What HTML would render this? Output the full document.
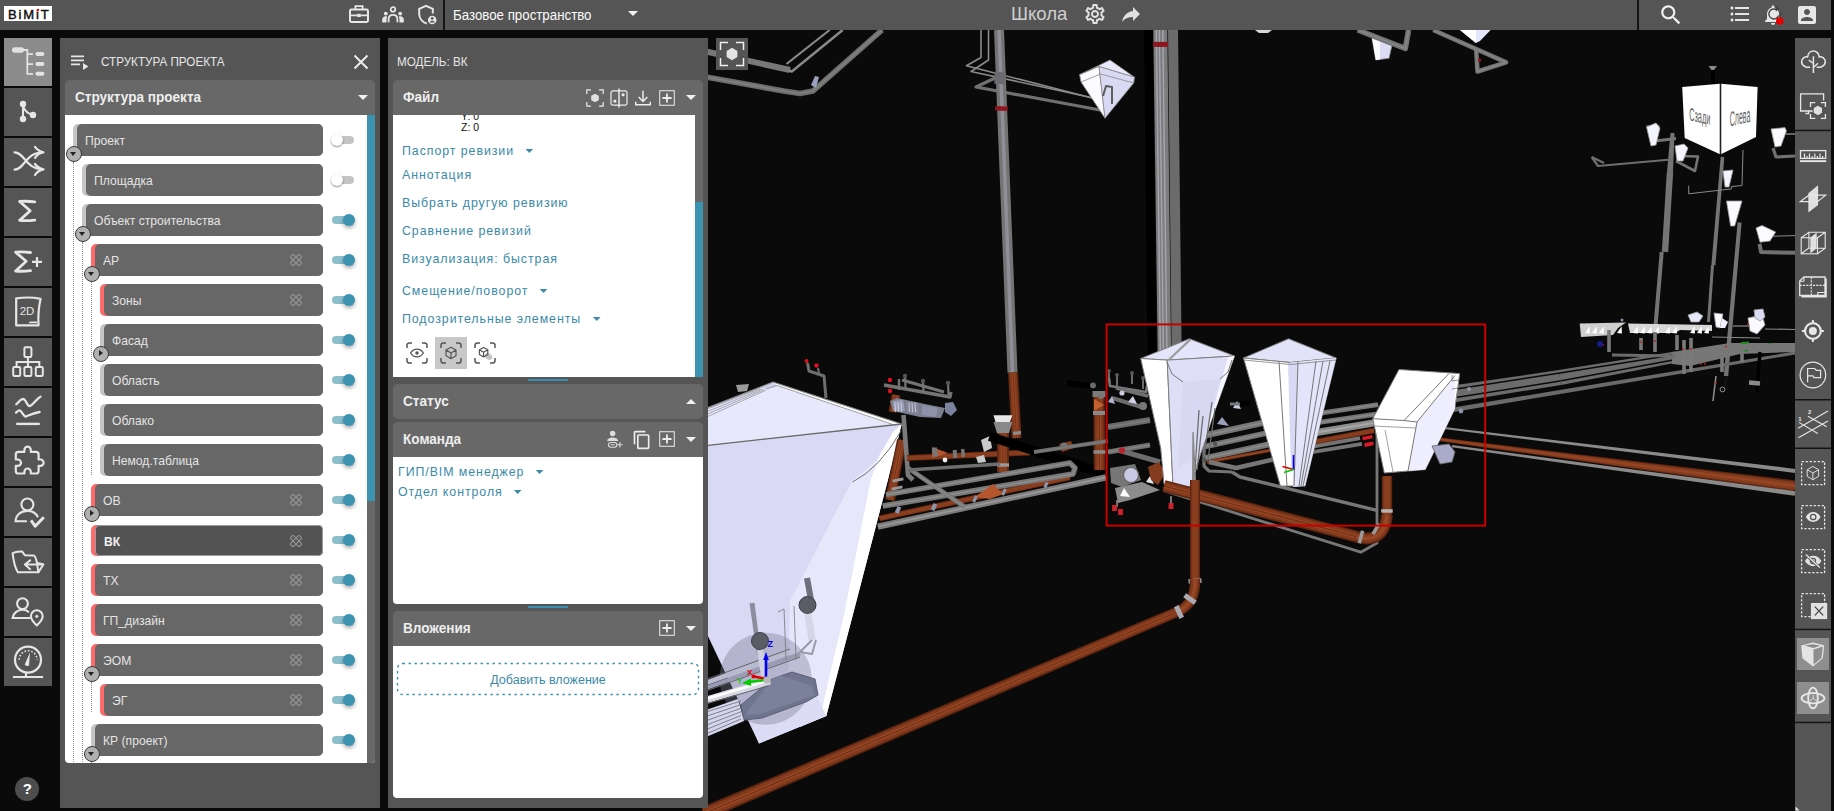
<!DOCTYPE html>
<html lang="ru"><head><meta charset="utf-8"><title>BIMIT</title>
<style>
*{box-sizing:border-box;margin:0;padding:0}
html,body{width:1834px;height:811px;overflow:hidden;background:#0a0a0a;font-family:"Liberation Sans",sans-serif;color:#e0e0e0}
.abs{position:absolute}
#scene{position:absolute;left:0;top:0;width:1834px;height:811px}
#topbar{position:absolute;left:0;top:0;width:1831px;height:30px;background:#555}
#logo{position:absolute;left:4px;top:6px;width:48px;height:15px;background:#fff;color:#111;font-weight:bold;font-size:14px;line-height:15px;text-align:center;letter-spacing:0px}
.tsep{position:absolute;top:0;width:2px;height:30px;background:#1c1c1c}
.ti{position:absolute;top:3px;width:24px;height:24px}
.ti svg,.lb svg,.rb svg,.hi svg{display:block;width:100%;height:100%}
#space{position:absolute;left:453px;top:0;height:30px;line-height:30px;font-size:14px;color:#f2f2f2}
#proj{position:absolute;left:1011px;top:0;height:30px;line-height:28px;font-size:19px;color:#cfcfcf}
.lb{position:absolute;left:4px;width:48px;height:48px;background:#555}
.lb.act{background:#8c8c8c}
.lb svg{width:48px;height:48px}
#help{position:absolute;left:16px;top:776px;width:24px;height:24px;border-radius:12px;background:#4d4d4d;color:#fff;font-weight:bold;font-size:15px;line-height:24px;text-align:center}
.panel{position:absolute;top:38px;height:770px;background:#555}
.ptitle{position:absolute;top:0;height:46px;line-height:47px;font-size:13px;color:#e6e6e6}
.sh{position:absolute;height:36px;background:#696969;border-radius:5px 5px 0 0;font-weight:bold;font-size:14.5px;line-height:35px;color:#eee;padding-left:10px}
.sh.closed{border-radius:5px}
.wc{position:absolute;background:#fff}
.hi{position:absolute;width:22px;height:22px}
.row{position:absolute;height:32px;right:52px;background:#696969;border-radius:5px;border-left:4px solid #bdbdbd;font-size:13px;line-height:32px;padding-left:8px;color:#e4e4e4;white-space:nowrap}
.row.red{border-left-color:#f06468}
.row.sel{background:#555;font-weight:bold;color:#fff;box-shadow:0 1px 2px rgba(0,0,0,.6)}
.fl{position:absolute;right:19px;top:9px;width:14px;height:14px}
.tg{position:absolute;left:267px;width:24px;height:8px;border-radius:4px;background:#c4c4c4}
.tg i{position:absolute;left:-1px;top:-3px;width:14px;height:14px;border-radius:7px;background:#fff;box-shadow:0 1px 2px rgba(0,0,0,.45)}
.tg.on{background:#8dbfd2}
.tg.on i{left:11px;background:#3a8fb0}
.ex{position:absolute;width:16px;height:16px;border-radius:8px;background:#b0b0b0;border:1.5px solid #3a3a3a}
.ex:after{content:"";position:absolute;left:3px;top:5px;border:3.5px solid transparent;border-top:4px solid #222;border-bottom:0}
.ex.r:after{left:5px;top:3px;border:3.5px solid transparent;border-left:4px solid #222;border-right:0}
.vl{position:absolute;width:0;border-left:1px dotted #777}
.lk{position:absolute;left:9px;font-size:13px;letter-spacing:1px;color:#3a8aa8;white-space:nowrap;line-height:16px}
.lk b{display:inline-block;width:0;height:0;border:4px solid transparent;border-top:4px solid #3a8aa8;border-bottom:0;margin-left:12px;vertical-align:2px}
.hnd{position:absolute;left:140px;width:40px;height:2px;background:#3a8fb0}
#rt{position:absolute;left:1795px;top:38px;width:36px;height:773px;background:#555}
.rb{position:absolute;left:4px;width:28px;height:28px}
.rsep{position:absolute;left:0;width:36px;height:2px;background:#2a2a2a}

.car{position:absolute;top:15px;width:0;height:0;border:5px solid transparent;border-top:5px solid #f0f0f0;border-bottom:0}
.car.up{border-top:0;border-bottom:5px solid #f0f0f0}
</style>
<style>
.sx{display:inline-block;transform-origin:0 50%;transform:scaleX(.934)}
.sh .sx{transform:scaleX(.904)}
.sh{font-size:15px}
.ptitle{transform-origin:0 50%;transform:scaleX(.897)}
.lk{transform-origin:0 50%;transform:scaleX(.95)}
#space{transform-origin:0 50%;transform:scaleX(.949)}
#proj{transform-origin:0 50%;transform:scaleX(.977)}
.row{height:31.5px;line-height:32.5px}
#logo span{display:inline-block;transform:scaleX(1.22);font-weight:normal;font-size:12.5px;letter-spacing:.3px;-webkit-text-stroke:.35px #111}
#logo i{position:absolute;left:33.4px;top:3.6px;width:2.2px;height:2.2px;background:#f00}
</style>
<style>
.row{line-height:34px;background:#676767}
.row.red{border-left-color:#ff6b6b}
.tg{left:268px;width:21px}
.tg i{left:-1px;top:-2px;width:12px;height:12px}
.tg.on i{left:10px}
.sh{background:#686868}
</style>
<style>.sh{line-height:33px}</style>
<style>#space{line-height:31.500px;color:#fafafa}.tsep{background:#141414}</style>
<style>.row{border-left-color:#c6c6c6}.vl{border-left-color:#8e8e8e}#help{left:15.300px;top:776.500px}</style>
<style>
#logo{line-height:16px;text-align:left;padding-left:3.900px;white-space:nowrap;overflow:hidden;height:15px}
#logo span{transform:none;font-size:13px;letter-spacing:1.900px;-webkit-text-stroke:.2px #111;font-weight:normal}
#logo i{left:33px;top:3px;width:2.100px;height:2.100px}
</style>
<style>#logo span{-webkit-text-stroke:.45px #111}</style>
<style>.hi{width:20px;height:20px;margin:1px 0 0 1px}</style>
<style>.fl{right:20px}.tg{left:266.500px;width:22.500px}.tg.on i{left:11.500px;background:#3b93b0;box-shadow:0 2px 4px rgba(0,0,0,.35)}.tg.on{background:#8cbecd}</style>
<style>.row.sel{box-shadow:inset 0 0 0 1px #9c9c9c;padding-left:9px;margin-top:.5px;height:31px;line-height:34.500px;background:#535353;color:#f0f0f0}</style>
<style>
.row{border-left:0;background:#c6c6c6;padding-left:12px}
.row.red{background:#ff6b6b}
.row:before{content:"";position:absolute;left:4px;top:0;right:0;bottom:0;background:#676767;border-radius:5px}
.row .sx{position:relative;z-index:1}
.row .fl{z-index:1}
.row.sel{box-shadow:none;padding-left:13px;background:#ff6b6b}
.row.sel:before{background:#535353;box-shadow:inset 0 0 0 1px #9c9c9c}
</style>
</head><body>
<svg id="scene" viewBox="0 0 1834 811" width="1834" height="811">
<rect x="0" y="0" width="1834" height="811" fill="#0a0a0a"/>
<polyline points="706,51.5 790,70" fill="none" stroke="#787878" stroke-width="6" stroke-linecap="butt" stroke-linejoin="round"/>
<polyline points="786.5,64 829.6,30" fill="none" stroke="#8a8a8a" stroke-width="2.2" stroke-linecap="butt" stroke-linejoin="round"/>
<polyline points="789,70.5 791.8,71.5 842.7,30" fill="none" stroke="#8a8a8a" stroke-width="2.4" stroke-linecap="butt" stroke-linejoin="round"/>
<polyline points="706,77 783.6,91 800,93.5 813,91 882,30" fill="none" stroke="#6e6e6e" stroke-width="5.6" stroke-linecap="butt" stroke-linejoin="round"/>
<polyline points="706,77 783.6,91 800,93.5 813,91 882,30" fill="none" stroke="#808080" stroke-width="1.68" stroke-linecap="butt" stroke-linejoin="round"/>
<polygon points="811,85 815,76 819,77 816,88" fill="#9aa2c0"/>
<polyline points="981,30 981,57.5 966.4,65.7 1094,98.5" fill="none" stroke="#8a8a8a" stroke-width="1.6" stroke-linecap="butt" stroke-linejoin="round"/>
<polyline points="988.5,30 988.5,60 971,71.5 1102.5,100" fill="none" stroke="#8a8a8a" stroke-width="1.6" stroke-linecap="butt" stroke-linejoin="round"/>
<polyline points="995,78 976,87 1104,110.8" fill="none" stroke="#707070" stroke-width="3.2" stroke-linecap="butt" stroke-linejoin="round"/>
<polygon points="994,30.2 1007.5,372.8 1017.5,372.4 1004,29.8" fill="#747474"/>
<polygon points="997.3,30.1 1010.8,372.7 1014.2,372.5 1000.7,29.9" fill="#8f8f9a"/>
<polygon points="1008,372.9 1011.5,438.3 1021.5,437.7 1018,372.3" fill="#5e2711"/>
<polygon points="1009.4,372.8 1012.9,438.2 1020.1,437.8 1016.6,372.4" fill="#843a1d"/>
<polygon points="1011.5,372.7 1015,438.1 1018,437.9 1014.5,372.5" fill="#974825"/>
<polygon points="1012.6,372.6 1016.1,438 1016.9,438 1013.4,372.6" fill="#6d2e15"/>
<rect x="995.2" y="106.2" width="12.5" height="4.5" fill="#8f1520" transform="rotate(2 1001.5 108.4)"/>
<rect x="994.5" y="72" width="11" height="12" fill="#6a6a70" transform="rotate(2 1000 78)"/>
<polygon points="1079.6,74.7 1110,60 1134.5,77.2 1099,66.5" fill="#e9e9fb" stroke="#8a8a8a" stroke-width="0.8" stroke-linejoin="round"/>
<polygon points="1079.6,74.7 1099,66.5 1105,118.2 1081,82" fill="#fbfbff" stroke="#8a8a8a" stroke-width="0.8" stroke-linejoin="round"/>
<polygon points="1099,66.5 1134.5,77.2 1133.7,83 1105,118.2" fill="#d9d9f4" stroke="#8a8a8a" stroke-width="0.8" stroke-linejoin="round"/>
<polyline points="1081,82 1100.5,74 1133.7,83" fill="none" stroke="#8a8a8a" stroke-width="0.8" stroke-linecap="butt" stroke-linejoin="round"/>
<polyline points="1103,96 1106,86 1112,87 1112,104" fill="none" stroke="#5e5e5e" stroke-width="2" stroke-linecap="butt" stroke-linejoin="round"/>
<polygon points="1144,30 1147.5,360 1156.5,360 1153,30" fill="#000"/>
<polygon points="1153.3,30.1 1157.7,354.1 1171.1,353.9 1167.3,29.9" fill="#7c7c7c"/>
<polygon points="1155.6,30 1159.7,354 1161.1,354 1157,30" fill="#a5a5b0"/>
<polygon points="1158.6,30 1162.7,354 1164.1,354 1160,30" fill="#a5a5b0"/>
<polygon points="1162.1,30 1166.2,354 1167.6,354 1163.5,30" fill="#a5a5b0"/>
<polygon points="1168,30.1 1171.6,348.1 1181.6,347.9 1178,29.9" fill="#6b6b6b"/>
<rect x="1153.1" y="41.9" width="15" height="5" fill="#8f1520" transform="rotate(0 1160.6 44.4)"/>
<polygon points="1255,30 1272,30 1268,33 1259,33" fill="#d8d8d8"/>
<polygon points="1371.7,36.2 1392.2,44.4 1389,58.3 1375.8,60" fill="#dcdcf5" stroke="#8a8a8a" stroke-width="0.8" stroke-linejoin="round"/>
<polygon points="1371.7,36.2 1380,40 1380,59.5 1375.8,60" fill="#fbfbff"/>
<polyline points="1357.8,30 1405.3,48.5 1408.6,30" fill="none" stroke="#747474" stroke-width="5.5" stroke-linecap="butt" stroke-linejoin="round"/>
<polyline points="1357.8,30 1405.3,48.5 1408.6,30" fill="none" stroke="#868686" stroke-width="1.65" stroke-linecap="butt" stroke-linejoin="round"/>
<polygon points="1460,30 1490.6,30 1480,41 1475.9,43" fill="#e6e6fa"/>
<polygon points="1460,30 1476,30 1475.9,43" fill="#fff"/>
<polyline points="1433.2,30 1506.2,62.4 1477.5,71.5 1476.2,50" fill="none" stroke="#747474" stroke-width="4.5" stroke-linecap="butt" stroke-linejoin="round"/>
<polyline points="1433.2,30 1506.2,62.4 1477.5,71.5 1476.2,50" fill="none" stroke="#868686" stroke-width="1.3499999999999999" stroke-linecap="butt" stroke-linejoin="round"/>
<rect x="1478" y="58.5" width="3" height="3" fill="#8f1520" transform="rotate(0 1479.5 60)"/>
<polyline points="1713,67 1713,84" fill="none" stroke="#000" stroke-width="4" stroke-linecap="butt" stroke-linejoin="round"/>
<polygon points="1708.5,66 1717,66 1714,70 1711.5,70" fill="#8a8a8a"/>
<polygon points="1682.2,87.1 1720,83.8 1720,154.3 1684.7,137.9" fill="#ffffff"/>
<polygon points="1720.9,83.8 1757.6,87.1 1756,137.1 1720.9,154.3" fill="#ffffff"/>
<polyline points="1720.5,83.8 1720.5,154.3" fill="none" stroke="#222" stroke-width="1.6" stroke-linecap="butt" stroke-linejoin="round"/>
<text transform="matrix(0.408 0.09 0 1 1689.200 120.300)" font-family="Liberation Sans, sans-serif" font-size="18" fill="#5c5c5c">Сзади</text>
<text transform="matrix(0.333 -0.075 0 1 1729.800 126.400)" font-family="Liberation Sans, sans-serif" font-size="21" fill="#5c5c5c">Слева</text>
<polygon points="1666.8,171.8 1661.8,251.8 1668.2,252.2 1673.2,172.2" fill="#747474"/>
<polygon points="1670.5,132.9 1667,171.8 1673,172.2 1674.5,133.1" fill="#747474"/>
<polygon points="1659.7,251.8 1653.5,325.8 1657.5,326.2 1663.7,252.2" fill="#747474"/>
<polygon points="1720.7,156.8 1711.4,264.8 1715.4,265.2 1724.3,157.2" fill="#747474"/>
<polygon points="1711,264.9 1707,321.9 1710,322.1 1714,265.1" fill="#747474"/>
<polygon points="1737.6,222.3 1723.8,375.8 1728.2,376.2 1741.6,222.7" fill="#747474"/>
<polyline points="1688.7,185.6 1688.7,193.8 1731.4,188.9 1731.4,186.5 1742,185.6 1743,150" fill="none" stroke="#8a8a8a" stroke-width="1" stroke-linecap="butt" stroke-linejoin="round"/>
<polyline points="1591.7,157 1598,166 1671,159.5" fill="none" stroke="#6e6e6e" stroke-width="2.2" stroke-linecap="butt" stroke-linejoin="round"/>
<polyline points="1591.7,157 1604,163" fill="none" stroke="#6e6e6e" stroke-width="2.4" stroke-linecap="butt" stroke-linejoin="round"/>
<polyline points="1655,141 1676,138.5" fill="none" stroke="#747474" stroke-width="3" stroke-linecap="butt" stroke-linejoin="round"/>
<polyline points="1676,156 1698,156.5 1695,171 1676,161" fill="none" stroke="#747474" stroke-width="2.6" stroke-linecap="butt" stroke-linejoin="round"/>
<polygon points="1646.5,126 1659.5,126 1656,126 1651,126" fill="#fafaff" stroke="#9a9a9a" stroke-width="0.8" stroke-linejoin="round"/>
<polygon points="1654,127 1659.5,126 1656,126 1653.5,126" fill="#d6d6f2"/>
<polygon points="1646.5,127 1656,123 1660,128 1656,145 1651,146" fill="#f4f4ff" stroke="#9a9a9a" stroke-width="0.8" stroke-linejoin="round"/>
<polygon points="1675,146 1684,144 1688,148 1683,161 1677,161" fill="#f4f4ff" stroke="#9a9a9a" stroke-width="0.8" stroke-linejoin="round"/>
<polygon points="1723,171 1733,170 1729,187 1725,187" fill="#f4f4ff" stroke="#9a9a9a" stroke-width="0.8" stroke-linejoin="round"/>
<polygon points="1726.5,201 1742,201 1734.7,226 1730.6,226" fill="#fafaff" stroke="#9a9a9a" stroke-width="0.8" stroke-linejoin="round"/>
<polygon points="1756,228 1762,225.5 1775.7,232 1770,241 1760,242.2" fill="#fafaff" stroke="#9a9a9a" stroke-width="0.8" stroke-linejoin="round"/>
<polygon points="1771,129 1785,127.6 1786.4,131 1781,146 1775,147" fill="#fafaff" stroke="#9a9a9a" stroke-width="0.8" stroke-linejoin="round"/>
<polyline points="1773,236.2 1795,235.6" fill="none" stroke="#8a8a8a" stroke-width="1" stroke-linecap="butt" stroke-linejoin="round"/>
<polyline points="1759.5,243.8 1761,252 1795,252.8" fill="none" stroke="#707070" stroke-width="4" stroke-linecap="butt" stroke-linejoin="round"/>
<polyline points="1786,134 1795,134" fill="none" stroke="#8a8a8a" stroke-width="1.4" stroke-linecap="butt" stroke-linejoin="round"/>
<polyline points="1773,148 1776,157 1795,156" fill="none" stroke="#707070" stroke-width="3.2" stroke-linecap="butt" stroke-linejoin="round"/>
<polygon points="1561.3,384.9 1677,362.4 1675,351.6 1558.7,370.1" fill="#6c6c6c"/>
<polygon points="1560.1,373.7 1676.1,355.2 1675.9,353.8 1559.9,372.3" fill="#0a0a0a"/>
<polygon points="1560.1,381.7 1676.1,360.2 1675.9,358.8 1559.9,380.3" fill="#0a0a0a"/>
<polygon points="1560.3,394 1795.2,354.5 1794.8,351.5 1559.7,390" fill="#6a6a6a"/>
<polygon points="1672,352 1730,343 1795,343 1795,352 1740,354 1690,366 1672,364" fill="#777"/>
<polyline points="1612,355 1675,356" fill="none" stroke="#6c6c6c" stroke-width="3" stroke-linecap="butt" stroke-linejoin="round"/>
<polygon points="1579.7,323.5 1626,322.5 1618,328 1613,335 1581,337" fill="#cfcfcf"/>
<polygon points="1628,323.5 1712,325 1712,331 1680,330 1675,333 1630,333" fill="#d6d6d6"/>
<polygon points="1585,333 1589.5,326.5 1590,333.5" fill="#fff"/>
<polygon points="1592,333 1596.5,326.5 1597,333.5" fill="#fff"/>
<polygon points="1599,333 1603.5,326.5 1604,333.5" fill="#fff"/>
<polygon points="1617,333 1621.5,326.5 1622,333.5" fill="#fff"/>
<polygon points="1633,333 1637.5,326.5 1638,333.5" fill="#fff"/>
<polygon points="1640,333 1644.5,326.5 1645,333.5" fill="#fff"/>
<polygon points="1647,333 1651.5,326.5 1652,333.5" fill="#fff"/>
<polygon points="1654,333 1658.5,326.5 1659,333.5" fill="#fff"/>
<polygon points="1665,333 1669.5,326.5 1670,333.5" fill="#fff"/>
<polygon points="1672,333 1676.5,326.5 1677,333.5" fill="#fff"/>
<polygon points="1690,333 1694.5,326.5 1695,333.5" fill="#fff"/>
<polygon points="1697,333 1701.5,326.5 1702,333.5" fill="#fff"/>
<polygon points="1704,333 1708.5,326.5 1709,333.5" fill="#fff"/>
<polyline points="1609,330 1609,352" fill="none" stroke="#7a7a7a" stroke-width="3.6" stroke-linecap="butt" stroke-linejoin="round"/>
<polyline points="1641,338 1641,350" fill="none" stroke="#7a7a7a" stroke-width="3.6" stroke-linecap="butt" stroke-linejoin="round"/>
<polyline points="1655,332 1655,352" fill="none" stroke="#7a7a7a" stroke-width="3.6" stroke-linecap="butt" stroke-linejoin="round"/>
<polyline points="1677,335 1677,350" fill="none" stroke="#7a7a7a" stroke-width="3.6" stroke-linecap="butt" stroke-linejoin="round"/>
<polyline points="1684,340 1684,374" fill="none" stroke="#7a7a7a" stroke-width="3.6" stroke-linecap="butt" stroke-linejoin="round"/>
<polyline points="1691,338 1691,372" fill="none" stroke="#7a7a7a" stroke-width="3.6" stroke-linecap="butt" stroke-linejoin="round"/>
<polyline points="1722,357 1722,372" fill="none" stroke="#7a7a7a" stroke-width="3.6" stroke-linecap="butt" stroke-linejoin="round"/>
<polyline points="1742,350 1742,362" fill="none" stroke="#7a7a7a" stroke-width="3.6" stroke-linecap="butt" stroke-linejoin="round"/>
<polygon points="1688,315 1697,312 1703,316 1699,322 1691,322" fill="#e8e8fb" stroke="#9a9a9a" stroke-width="0.8" stroke-linejoin="round"/>
<polygon points="1714,313 1723,314 1720,328 1716,327" fill="#fafaff" stroke="#9a9a9a" stroke-width="0.8" stroke-linejoin="round"/>
<polygon points="1722,318 1728,322 1725,328 1720,328" fill="#f0f0ff"/>
<polygon points="1748,318 1762,315 1765,325 1757,334 1750,331" fill="#fafaff" stroke="#9a9a9a" stroke-width="0.8" stroke-linejoin="round"/>
<polygon points="1754,310 1763,309 1765,317 1760,321 1755,318" fill="#dcdcf5" stroke="#9a9a9a" stroke-width="0.8" stroke-linejoin="round"/>
<polyline points="1733,326 1750,326" fill="none" stroke="#8a8a8a" stroke-width="1.2" stroke-linecap="butt" stroke-linejoin="round"/>
<polyline points="1765,329 1795,329.5" fill="none" stroke="#8a8a8a" stroke-width="1.2" stroke-linecap="butt" stroke-linejoin="round"/>
<polyline points="1712,337 1760,338" fill="none" stroke="#8a8a8a" stroke-width="1.2" stroke-linecap="butt" stroke-linejoin="round"/>
<polyline points="1716,376 1713,401" fill="none" stroke="#8a8a8a" stroke-width="1.6" stroke-linecap="butt" stroke-linejoin="round"/>
<polyline points="1760,352 1757,392" fill="none" stroke="#000" stroke-width="3.4" stroke-linecap="butt" stroke-linejoin="round"/>
<polyline points="1726,378 1724,392" fill="none" stroke="#111" stroke-width="3.2" stroke-linecap="butt" stroke-linejoin="round"/>
<circle cx="1722.5" cy="389.5" r="2.4" fill="#111" stroke="#aaa" stroke-width="0.8"/>
<rect x="1749" y="380.8" width="11" height="4.5" fill="#8a8a8a" transform="rotate(5 1754.5 383)"/>
<circle cx="1603" cy="345" r="0.9" fill="#c01818"/>
<circle cx="1641" cy="342" r="0.9" fill="#c01818"/>
<circle cx="1655" cy="341" r="0.9" fill="#c01818"/>
<circle cx="1683" cy="349" r="0.9" fill="#c01818"/>
<circle cx="1691" cy="349" r="0.9" fill="#c01818"/>
<circle cx="1701" cy="364" r="0.9" fill="#c01818"/>
<circle cx="1705" cy="364" r="0.9" fill="#c01818"/>
<circle cx="1726" cy="346.5" r="0.9" fill="#c01818"/>
<circle cx="1716" cy="383" r="0.9" fill="#c01818"/>
<circle cx="1748" cy="324" r="0.9" fill="#c01818"/>
<polygon points="1741,342 1749,341.5 1749,343.5 1741,344" fill="#1f8a1f"/>
<polygon points="1741,351 1748,349.5 1748,351.5" fill="#1f8a1f"/>
<polygon points="1767,343 1771,343 1771,344.5" fill="#1f8a1f"/>
<circle cx="1600" cy="344" r="3" fill="#1a1a90"/>
<polygon points="1441.3,404.4 1561.1,384.9 1558.9,370.1 1438.7,387.6" fill="#6c6c6c"/>
<polygon points="1440.1,392.3 1560.1,373.7 1559.9,372.3 1439.9,390.7" fill="#0a0a0a"/>
<polygon points="1440.1,400.8 1560.1,381.7 1559.9,380.3 1439.9,399.2" fill="#0a0a0a"/>
<polygon points="1440.4,414.2 1560.3,394 1559.7,390 1439.6,409.8" fill="#6a6a6a"/>
<circle cx="1469" cy="389" r="2" fill="#8e94aa"/>
<circle cx="1461" cy="411" r="2.4" fill="#8e94aa"/>
<circle cx="1622" cy="320" r="1.5" fill="#8e94aa"/>
<polygon points="1443.9,429.1 1794.8,472.9 1795.2,468.9 1444.1,426.9" fill="#8a8a8a"/>
<polygon points="1439.8,441.2 1794.3,491.4 1795.7,480.4 1440.2,437.6" fill="#5e2711"/>
<polygon points="1439.8,440.7 1794.5,489.9 1795.5,481.9 1440.2,438.1" fill="#843a1d"/>
<polygon points="1439.9,440 1794.8,487.6 1795.2,484.2 1440.1,438.8" fill="#944523"/>
<polygon points="1451.8,447.2 1794.7,495.8 1795.3,491.2 1452.2,445" fill="#8a8a8a"/>
<polygon points="706,445.6 901.7,424 888,480 826.3,716 759,743.6 706,632" fill="#d9d9f5"/>
<polygon points="706,408.3 773,382 901.7,424 706,445.6" fill="#e8e8fc"/>
<polygon points="893,432 875,462 852.5,480 790,601 788,690 800,727 819.5,718.7 844.3,613 870.6,480" fill="#e7e7fc"/>
<polygon points="901.7,424 887.8,480 853.4,613 826.3,716 819.5,718.7 844.3,613 870.6,480 880,455 893,432" fill="#ffffff"/>
<polygon points="759,743.6 826.3,716 816,694 752,726" fill="#dcdcf6"/>
<polygon points="773,382 901.7,424 893,424.5 777,385.5 766,389" fill="#ffffff"/>
<polygon points="757,388 773,382 777,385.5 766,389" fill="#d0d0ee"/>
<polyline points="706,409.5 760,388.6" fill="none" stroke="#8a8a90" stroke-width="0.7" stroke-linecap="butt" stroke-linejoin="round"/>
<polyline points="706,412.1 762,389.1" fill="none" stroke="#8a8a90" stroke-width="0.7" stroke-linecap="butt" stroke-linejoin="round"/>
<polyline points="706,414.7 764,389.6" fill="none" stroke="#8a8a90" stroke-width="0.7" stroke-linecap="butt" stroke-linejoin="round"/>
<polyline points="706,417.3 766,390.1" fill="none" stroke="#8a8a90" stroke-width="0.7" stroke-linecap="butt" stroke-linejoin="round"/>
<polyline points="706,408.3 773,382 901.7,424" fill="none" stroke="#808080" stroke-width="1.2" stroke-linecap="butt" stroke-linejoin="round"/>
<polyline points="766,389 777,385.5 893,424.5" fill="none" stroke="#8a8a8a" stroke-width="0.8" stroke-linecap="butt" stroke-linejoin="round"/>
<polyline points="706,445.6 901.7,424" fill="none" stroke="#6a6a6a" stroke-width="1.3" stroke-linecap="butt" stroke-linejoin="round"/>
<path d="M901 431Q880 468 852.500 482" fill="none" stroke="#707070" stroke-width="1"/>
<circle cx="765.6" cy="678.7" r="46" fill="#7a7a90" fill-opacity="0.38"/>
<polygon points="772,679 792,672 815,679 818,695 806.6,701.7 762,718 744,720 741,705" fill="#70758f" stroke="#5a5f74" stroke-width="1" stroke-linejoin="round"/>
<polygon points="772,679 781,675.5 812,686 815,695 760,714 745,715" fill="#7b809b"/>
<polyline points="706,683 790,652" fill="none" stroke="#b9b9d0" stroke-width="5" stroke-linecap="butt" stroke-linejoin="round"/>
<polyline points="706,679.5 790,649" fill="none" stroke="#666" stroke-width="1" stroke-linecap="butt" stroke-linejoin="round"/>
<polyline points="706,688 800,654" fill="none" stroke="#9a9ab4" stroke-width="4" stroke-linecap="butt" stroke-linejoin="round"/>
<polyline points="706,691 800,657" fill="none" stroke="#666" stroke-width="1" stroke-linecap="butt" stroke-linejoin="round"/>
<polyline points="706,700 770,681" fill="none" stroke="#d8d8e4" stroke-width="7" stroke-linecap="butt" stroke-linejoin="round"/>
<polyline points="706,699 770,680" fill="none" stroke="#ffffff" stroke-width="2.4" stroke-linecap="butt" stroke-linejoin="round"/>
<polyline points="706,704 768,686" fill="none" stroke="#666" stroke-width="1" stroke-linecap="butt" stroke-linejoin="round"/>
<polygon points="706,710 738,699 744,721 706,737" fill="#d4d4ea"/>
<polyline points="706,712 741,701" fill="none" stroke="#77778a" stroke-width="0.9" stroke-linecap="butt" stroke-linejoin="round"/>
<polyline points="706,716.4 741,704.6" fill="none" stroke="#77778a" stroke-width="0.9" stroke-linecap="butt" stroke-linejoin="round"/>
<polyline points="706,720.8 741,708.2" fill="none" stroke="#77778a" stroke-width="0.9" stroke-linecap="butt" stroke-linejoin="round"/>
<polyline points="706,725.2 741,711.8" fill="none" stroke="#77778a" stroke-width="0.9" stroke-linecap="butt" stroke-linejoin="round"/>
<polyline points="706,729.6 741,715.4" fill="none" stroke="#77778a" stroke-width="0.9" stroke-linecap="butt" stroke-linejoin="round"/>
<polyline points="706,734 741,719" fill="none" stroke="#77778a" stroke-width="0.9" stroke-linecap="butt" stroke-linejoin="round"/>
<polygon points="749.5,603.3 757,655.3 761,654.7 754.5,602.7" fill="#8d8da0"/>
<polygon points="804,578.5 808,600.5 814,599.5 810,577.5" fill="#70707c"/>
<circle cx="807.5" cy="605" r="8.5" fill="#5c5c66" stroke="#3e3e46" stroke-width="1"/>
<circle cx="760" cy="641" r="8.5" fill="#5c5c66" stroke="#3e3e46" stroke-width="1"/>
<polygon points="757,650.5 761,676.5 767,675.5 763,649.5" fill="#d0d0e0"/>
<polygon points="804.5,614.5 808.5,640.5 815.5,639.5 811.5,613.5" fill="#d6d6e8"/>
<polyline points="812,640 800,652 812,654 816,640" fill="none" stroke="#9a9aaa" stroke-width="2" stroke-linecap="butt" stroke-linejoin="round"/>
<polyline points="778,612 784,609 786,660" fill="none" stroke="#777" stroke-width="0.8" stroke-linecap="butt" stroke-linejoin="round"/>
<polyline points="794,606 796,660" fill="none" stroke="#777" stroke-width="0.8" stroke-linecap="butt" stroke-linejoin="round"/>
<polyline points="766,678 766,658" fill="none" stroke="#0000ee" stroke-width="2.6" stroke-linecap="butt" stroke-linejoin="round"/>
<polygon points="763.2,660 768.8,660 766,652" fill="#0000ee"/>
<polyline points="766,679 752,676" fill="none" stroke="#e00000" stroke-width="2.4" stroke-linecap="butt" stroke-linejoin="round"/>
<circle cx="753.5" cy="676.5" r="2" fill="#e00000"/>
<polyline points="766,680 748,682" fill="none" stroke="#00cc00" stroke-width="2.4" stroke-linecap="butt" stroke-linejoin="round"/>
<polygon points="742,683 751,678.5 751,686" fill="#00cc00"/>
<circle cx="767" cy="680" r="3.6" fill="#b8b8b8"/>
<text x="767.500" y="646.500" font-family="Liberation Sans, sans-serif" font-size="9" font-weight="bold" fill="#0000ee">Z</text>
<text x="747" y="675" font-family="Liberation Sans, sans-serif" font-size="8" font-weight="bold" fill="#e00000">X</text>
<text x="736.500" y="684" font-family="Liberation Sans, sans-serif" font-size="9" fill="#00cc00">Y</text>
<polygon points="736,385 749,384 747,391 738,392" fill="#9a9a9a"/>
<polyline points="807.5,363 809,371 824,376 826,398" fill="none" stroke="#6e6e6e" stroke-width="3" stroke-linecap="butt" stroke-linejoin="round"/>
<polyline points="818,368 819,374" fill="none" stroke="#6e6e6e" stroke-width="2" stroke-linecap="butt" stroke-linejoin="round"/>
<circle cx="806.5" cy="361" r="2" fill="#e01020"/>
<circle cx="816.5" cy="365.5" r="2.2" fill="#e01020"/>
<polygon points="891.6,394.2 888.6,411.2 897.4,412.8 900.4,395.8" fill="#5e2711"/>
<polygon points="892.8,394.4 889.8,411.4 896.2,412.6 899.2,395.6" fill="#843a1d"/>
<polygon points="894.7,394.8 891.7,411.8 894.3,412.2 897.3,395.2" fill="#974825"/>
<polygon points="895.6,394.9 892.6,411.9 893.4,412.1 896.4,395.1" fill="#6d2e15"/>
<polygon points="897.1,439 885.1,499 894.9,501 906.9,441" fill="#5e2711"/>
<polygon points="898.5,439.3 886.5,499.3 893.5,500.7 905.5,440.7" fill="#843a1d"/>
<polygon points="900.5,439.7 888.5,499.7 891.5,500.3 903.5,440.3" fill="#974825"/>
<polygon points="901.6,439.9 889.6,499.9 890.4,500.1 902.4,440.1" fill="#6d2e15"/>
<polyline points="884,385 950,397 951,392" fill="none" stroke="#747474" stroke-width="3.4" stroke-linecap="butt" stroke-linejoin="round"/>
<polyline points="899,379 899,390" fill="none" stroke="#747474" stroke-width="2.4" stroke-linecap="butt" stroke-linejoin="round"/>
<polyline points="905,376 905.5,388" fill="none" stroke="#747474" stroke-width="2.2" stroke-linecap="butt" stroke-linejoin="round"/>
<circle cx="905" cy="376" r="2.2" fill="#555"/>
<polyline points="923,381 923.5,393" fill="none" stroke="#747474" stroke-width="2.2" stroke-linecap="butt" stroke-linejoin="round"/>
<circle cx="923" cy="381" r="2.2" fill="#555"/>
<polyline points="948,383 948.5,395" fill="none" stroke="#747474" stroke-width="2.2" stroke-linecap="butt" stroke-linejoin="round"/>
<circle cx="948" cy="383" r="2.2" fill="#555"/>
<polyline points="902,380 944,392" fill="none" stroke="#747474" stroke-width="3" stroke-linecap="butt" stroke-linejoin="round"/>
<circle cx="890" cy="380" r="2.2" fill="#e01020"/>
<circle cx="890" cy="391" r="2.2" fill="#e01020"/>
<polygon points="890,401 897,398 925,404 945,408 941,418 920,417 893,411" fill="#7c7f90"/>
<polygon points="893,401 903,400 905,411 894,411" fill="#9a9eb8"/>
<polygon points="906,402 918,403 918,414 907,412" fill="#85879a"/>
<polygon points="922,405 938,408 936,417 922,415" fill="#8d91aa"/>
<polyline points="895,402.5 895.5,412" fill="none" stroke="#d6d6e0" stroke-width="0.8" stroke-linecap="butt" stroke-linejoin="round"/>
<polyline points="898,402.5 898.5,412" fill="none" stroke="#d6d6e0" stroke-width="0.8" stroke-linecap="butt" stroke-linejoin="round"/>
<polyline points="901,402.5 901.5,412" fill="none" stroke="#d6d6e0" stroke-width="0.8" stroke-linecap="butt" stroke-linejoin="round"/>
<polyline points="909,402.5 909.5,412" fill="none" stroke="#d6d6e0" stroke-width="0.8" stroke-linecap="butt" stroke-linejoin="round"/>
<polyline points="912,402.5 912.5,412" fill="none" stroke="#d6d6e0" stroke-width="0.8" stroke-linecap="butt" stroke-linejoin="round"/>
<polyline points="915,402.5 915.5,412" fill="none" stroke="#d6d6e0" stroke-width="0.8" stroke-linecap="butt" stroke-linejoin="round"/>
<polygon points="945,403 953,402 957,410 951,416 945,412" fill="#7c829e"/>
<polyline points="903.5,415 908,475 913,480" fill="none" stroke="#7a7a7a" stroke-width="4.6" stroke-linecap="butt" stroke-linejoin="round"/>
<polygon points="907.1,461 1030.1,455.5 1029.9,449.5 906.9,455" fill="#5e2711"/>
<polygon points="907.1,460.2 1030.1,454.7 1029.9,450.3 906.9,455.8" fill="#843a1d"/>
<polygon points="907,458.9 1030,453.4 1030,451.6 907,457.1" fill="#974825"/>
<polygon points="907,458.2 1030,452.7 1030,452.3 907,457.8" fill="#6d2e15"/>
<polygon points="932,447 948,453 932,458" fill="#b5562e"/>
<rect x="932.5" y="447.5" width="5" height="9" fill="#777" transform="rotate(-10 935 452)"/>
<rect x="953" y="450" width="4" height="8" fill="#777" transform="rotate(-5 955 454)"/>
<rect x="961.3" y="449" width="3.4" height="8" fill="#777" transform="rotate(-5 963 453)"/>
<circle cx="945" cy="460" r="2.4" fill="#eee"/>
<polygon points="981,440 990,436 992,448 984,452" fill="#c9c9c9"/>
<polygon points="976,457 984,455 986,462 978,463" fill="#c9c9c9"/>
<polygon points="997,432 997,472 1009,472 1009,432" fill="#5e2711"/>
<polygon points="998.7,432 998.7,472 1007.3,472 1007.3,432" fill="#843a1d"/>
<polygon points="1001.2,432 1001.2,472 1004.8,472 1004.8,432" fill="#974825"/>
<polygon points="1002.5,432 1002.5,472 1003.5,472 1003.5,432" fill="#6d2e15"/>
<polygon points="993.5,415.3 1012.3,415.3 1010,422 995.5,422" fill="#e6e6e6"/>
<polygon points="993.5,422 1012.3,422 1009,433 997,433" fill="#8a8a8a"/>
<rect x="997" y="463.3" width="12" height="3.4" fill="#9a9a9a" transform="rotate(0 1003 465)"/>
<rect x="1013" y="431.3" width="8" height="3.4" fill="#8a8a8a" transform="rotate(-8 1017 433)"/>
<polygon points="988,440.7 1104.5,478.8 1107.5,469.2 990.8,432.1" fill="#000"/>
<polygon points="1093.3,391 1093.8,470 1105.2,470 1104.7,391" fill="#5e2711"/>
<polygon points="1094.9,391 1095.4,470 1103.6,470 1103.1,391" fill="#843a1d"/>
<polygon points="1097.3,391 1097.8,470 1101.2,470 1100.7,391" fill="#974825"/>
<polygon points="1098.5,391 1099,470 1100,470 1099.5,391" fill="#6d2e15"/>
<rect x="1092.5" y="391" width="13" height="6" fill="#7a7a7a" transform="rotate(0 1099 394)"/>
<rect x="1093" y="411" width="12" height="4" fill="#8a8a8a" transform="rotate(0 1099 413)"/>
<rect x="1093.5" y="450.2" width="12" height="3.5" fill="#8a8a8a" transform="rotate(0 1099.5 452)"/>
<polygon points="1094,399 1104,405 1094,411" fill="#c4602f"/>
<polyline points="1067,383 1090,386 1096,388" fill="none" stroke="#000" stroke-width="6" stroke-linecap="butt" stroke-linejoin="round"/>
<circle cx="1093" cy="385.5" r="3" fill="#6a6a6a"/>
<polygon points="1059,444 1071,441 1074,448 1062,452" fill="#843a1d"/>
<circle cx="1064" cy="446" r="3.6" fill="#777"/>
<polyline points="877.9,526.6 1105.9,477.4" fill="none" stroke="#7c7c7c" stroke-width="6.2" stroke-linecap="butt" stroke-linejoin="round"/>
<polyline points="877.9,526.6 1105.9,477.4" fill="none" stroke="#989898" stroke-width="1.8599999999999999" stroke-linecap="butt" stroke-linejoin="round"/>
<polygon points="880.1,521.3 1070.4,480.3 1069.2,474.5 878.9,515.5" fill="#5e2711"/>
<polygon points="880,520.5 1070.3,479.5 1069.3,475.3 879,516.3" fill="#843a1d"/>
<polygon points="879.7,519.3 1070,478.3 1069.6,476.5 879.3,517.5" fill="#974825"/>
<polygon points="879.6,518.6 1069.9,477.6 1069.7,477.2 879.4,518.2" fill="#6d2e15"/>
<polyline points="886,494.6 1069.8,463 1075,468 1073,474 882.8,506" fill="none" stroke="#787878" stroke-width="5.4" stroke-linecap="butt" stroke-linejoin="round"/>
<polyline points="886,494.6 1069.8,463 1075,468 1073,474 882.8,506" fill="none" stroke="#8c8c8c" stroke-width="1.62" stroke-linecap="butt" stroke-linejoin="round"/>
<polyline points="907.4,467.6 964.8,507" fill="none" stroke="#787878" stroke-width="4.6" stroke-linecap="butt" stroke-linejoin="round"/>
<polyline points="907.4,467.6 964.8,507" fill="none" stroke="#8a8a8a" stroke-width="1.38" stroke-linecap="butt" stroke-linejoin="round"/>
<polyline points="908,470 1000,464" fill="none" stroke="#6e6e6e" stroke-width="3.6" stroke-linecap="butt" stroke-linejoin="round"/>
<polyline points="1034,452 1108,441" fill="none" stroke="#6e6e6e" stroke-width="4" stroke-linecap="butt" stroke-linejoin="round"/>
<polyline points="1034,452 1108,441" fill="none" stroke="#808080" stroke-width="1.2" stroke-linecap="butt" stroke-linejoin="round"/>
<polygon points="975,497 993,484 1003,494 990,499" fill="#b5562e"/>
<rect x="973.5" y="495.5" width="3" height="7" fill="#8e94aa" transform="rotate(25 975 499)"/>
<rect x="1002.5" y="488.5" width="3" height="7" fill="#8e94aa" transform="rotate(25 1004 492)"/>
<rect x="896" y="506.5" width="4" height="7" fill="#8e94aa" transform="rotate(25 898 510)"/>
<rect x="932" y="503.5" width="4" height="7" fill="#8e94aa" transform="rotate(25 934 507)"/>
<rect x="1044.5" y="482" width="3" height="6" fill="#8e94aa" transform="rotate(25 1046 485)"/>
<rect x="892.5" y="478.5" width="11" height="3" fill="#9a9a9a" transform="rotate(-12 898 480)"/>
<rect x="891.5" y="486.5" width="11" height="3" fill="#9a9a9a" transform="rotate(-12 897 488)"/>
<polyline points="1108,452 1150,445" fill="none" stroke="#707070" stroke-width="5" stroke-linecap="butt" stroke-linejoin="round"/>
<polyline points="1108,452 1150,445" fill="none" stroke="#838383" stroke-width="1.5" stroke-linecap="butt" stroke-linejoin="round"/>
<polyline points="1118,450 1160,462" fill="none" stroke="#6c6c6c" stroke-width="5" stroke-linecap="butt" stroke-linejoin="round"/>
<circle cx="1122" cy="450.5" r="3" fill="#c0202a"/>
<polygon points="1110,468 1135,464 1141,480 1122,487 1111,483" fill="#767676"/>
<circle cx="1131" cy="475" r="7.5" fill="#c9c9e6" stroke="#666" stroke-width="1.2"/>
<polygon points="1115,488 1142,482 1160,490 1130,500 1118,503" fill="#8c8c8c"/>
<polygon points="1120,496 1124,488 1130,497" fill="#fff"/>
<polygon points="1146,482 1150,476 1154,484" fill="#e6e6e6"/>
<polygon points="1148,467 1159,462 1165,474 1158,485 1151,480" fill="#843a1d"/>
<polyline points="1117,500 1117,507" fill="none" stroke="#777" stroke-width="2" stroke-linecap="butt" stroke-linejoin="round"/>
<polyline points="1171,496 1171,503" fill="none" stroke="#777" stroke-width="2" stroke-linecap="butt" stroke-linejoin="round"/>
<polygon points="1112.1,505 1116.9,505 1116.9,511 1112.1,511" fill="#d0202c"/>
<polygon points="1118.1,509 1122.9,509 1122.9,515 1118.1,515" fill="#d0202c"/>
<polygon points="1168.6,503 1173.4,503 1173.4,509 1168.6,509" fill="#d0202c"/>
<circle cx="1164" cy="468" r="2.6" fill="#b03020"/>
<polyline points="1109,378 1110,386 1146,392 1147,386" fill="none" stroke="#777" stroke-width="2.6" stroke-linecap="butt" stroke-linejoin="round"/>
<polyline points="1109,371 1109,382" fill="none" stroke="#777" stroke-width="1.8" stroke-linecap="butt" stroke-linejoin="round"/>
<circle cx="1109" cy="371" r="1.9" fill="#5a5a5a"/>
<polyline points="1117,375 1117,386" fill="none" stroke="#777" stroke-width="1.8" stroke-linecap="butt" stroke-linejoin="round"/>
<circle cx="1117" cy="375" r="1.9" fill="#5a5a5a"/>
<polyline points="1132,373 1132,384" fill="none" stroke="#777" stroke-width="1.8" stroke-linecap="butt" stroke-linejoin="round"/>
<circle cx="1132" cy="373" r="1.9" fill="#5a5a5a"/>
<polyline points="1143,378 1143,389" fill="none" stroke="#777" stroke-width="1.8" stroke-linecap="butt" stroke-linejoin="round"/>
<circle cx="1143" cy="378" r="1.9" fill="#5a5a5a"/>
<polyline points="1116,388 1148,396" fill="none" stroke="#707070" stroke-width="3.5" stroke-linecap="butt" stroke-linejoin="round"/>
<circle cx="1122" cy="393" r="2.6" fill="#c8c8d8"/>
<polyline points="1112,398 1145,408" fill="none" stroke="#6c6c6c" stroke-width="4" stroke-linecap="butt" stroke-linejoin="round"/>
<polygon points="1128,402 1133,396 1137,404" fill="#d0d0e6"/>
<polygon points="1108,402 1112,396 1115,404" fill="#b0b4cc"/>
<circle cx="1143" cy="406" r="4" fill="#777"/>
<circle cx="1101" cy="396" r="3" fill="#777"/>
<polyline points="1108,427 1150,420" fill="none" stroke="#6a6a6a" stroke-width="6" stroke-linecap="butt" stroke-linejoin="round"/>
<polyline points="1108,427 1150,420" fill="none" stroke="#7a7a7a" stroke-width="1.7999999999999998" stroke-linecap="butt" stroke-linejoin="round"/>
<polyline points="1205,435.4 1272,420.8" fill="none" stroke="#767676" stroke-width="6.2" stroke-linecap="butt" stroke-linejoin="round"/>
<polyline points="1205,435.4 1272,420.8" fill="none" stroke="#8a8a8a" stroke-width="1.8599999999999999" stroke-linecap="butt" stroke-linejoin="round"/>
<polyline points="1205,446.6 1272,432" fill="none" stroke="#767676" stroke-width="5.6" stroke-linecap="butt" stroke-linejoin="round"/>
<polyline points="1205,446.6 1272,432" fill="none" stroke="#8a8a8a" stroke-width="1.68" stroke-linecap="butt" stroke-linejoin="round"/>
<polyline points="1205,458.2 1272,443.6" fill="none" stroke="#767676" stroke-width="6" stroke-linecap="butt" stroke-linejoin="round"/>
<polyline points="1205,458.2 1272,443.6" fill="none" stroke="#8a8a8a" stroke-width="1.7999999999999998" stroke-linecap="butt" stroke-linejoin="round"/>
<polyline points="1232,405 1250,403" fill="none" stroke="#000" stroke-width="5" stroke-linecap="butt" stroke-linejoin="round"/>
<polygon points="1233,408 1237,401 1241,409" fill="#c8cce0"/>
<rect x="1230" y="402.5" width="10" height="3" fill="#777" transform="rotate(0 1235 404)"/>
<polygon points="1217,424 1222,417 1229,426" fill="#9aa0bc"/>
<polyline points="1312,414.4 1378,404.6" fill="none" stroke="#747474" stroke-width="5" stroke-linecap="butt" stroke-linejoin="round"/>
<polyline points="1312,414.4 1378,404.6" fill="none" stroke="#868686" stroke-width="1.5" stroke-linecap="butt" stroke-linejoin="round"/>
<polyline points="1312,423.4 1376,414.2" fill="none" stroke="#767676" stroke-width="5" stroke-linecap="butt" stroke-linejoin="round"/>
<polyline points="1312,423.4 1376,414.2" fill="none" stroke="#8a8a8a" stroke-width="1.5" stroke-linecap="butt" stroke-linejoin="round"/>
<polyline points="1312,433.3 1375,422.7" fill="none" stroke="#8c8c8c" stroke-width="7" stroke-linecap="butt" stroke-linejoin="round"/>
<polyline points="1312,433.3 1375,422.7" fill="none" stroke="#a8a8a8" stroke-width="2.1" stroke-linecap="butt" stroke-linejoin="round"/>
<polygon points="1313.5,444.9 1374.5,433.2 1373.5,427.8 1312.5,439.5" fill="#5e2711"/>
<polygon points="1313.4,444.1 1374.4,432.4 1373.6,428.6 1312.6,440.3" fill="#843a1d"/>
<polygon points="1313.2,443 1374.2,431.3 1373.8,429.7 1312.8,441.4" fill="#974825"/>
<polygon points="1313,442.4 1374,430.7 1374,430.3 1313,442" fill="#6d2e15"/>
<polyline points="1313,446.6 1360,438.2" fill="none" stroke="#747474" stroke-width="3.8" stroke-linecap="butt" stroke-linejoin="round"/>
<polyline points="1312,452.2 1362,443.9" fill="none" stroke="#747474" stroke-width="3.8" stroke-linecap="butt" stroke-linejoin="round"/>
<polygon points="1207.3,463.7 1280.3,450.2 1279.7,446.8 1206.7,460.3" fill="#5e2711"/>
<polygon points="1207.2,463.2 1280.2,449.7 1279.8,447.3 1206.8,460.8" fill="#843a1d"/>
<polygon points="1207.1,462.5 1280.1,449 1279.9,448 1206.9,461.5" fill="#974825"/>
<polygon points="1207,462.1 1280,448.6 1280,448.4 1207,461.9" fill="#6d2e15"/>
<polyline points="1204,440 1204,466 1209,471 1232,472" fill="none" stroke="#747474" stroke-width="3.2" stroke-linecap="butt" stroke-linejoin="round"/>
<polyline points="1209,462 1236,468 1280,458" fill="none" stroke="#767676" stroke-width="4.4" stroke-linecap="butt" stroke-linejoin="round"/>
<polyline points="1232,472 1240,477 1377,510.4" fill="none" stroke="#777" stroke-width="3.4" stroke-linecap="butt" stroke-linejoin="round"/>
<polyline points="1377,425 1377,543 1360.8,552.2 1164,490.7" fill="none" stroke="#777" stroke-width="2.8" stroke-linecap="butt" stroke-linejoin="round"/>
<polygon points="1140.7,358.5 1189.4,338.8 1234.5,356 1167.2,360.1" fill="#e4e4fa" stroke="#808080" stroke-width="1" stroke-linejoin="round"/>
<polygon points="1140.7,358.5 1167.2,360.1 1173,487 1164,484 1160.7,448" fill="#ffffff" stroke="#808080" stroke-width="1" stroke-linejoin="round"/>
<polygon points="1167.2,360.1 1234.5,356 1211.5,420 1190,487 1173,487" fill="#dedef7" stroke="#808080" stroke-width="1" stroke-linejoin="round"/>
<polygon points="1167.2,360.1 1189.4,338.8 1192,339.5 1170,360" fill="#9a9a9a"/>
<polygon points="1211.5,420 1234.5,356 1228,357 1196,470 1190,487" fill="#f6f6ff"/>
<polyline points="1167,362 1172,374 1183,382" fill="none" stroke="#777" stroke-width="1" stroke-linecap="butt" stroke-linejoin="round"/>
<polyline points="1232,360 1228,372 1220,379" fill="none" stroke="#777" stroke-width="1" stroke-linecap="butt" stroke-linejoin="round"/>
<polygon points="1183,382 1220,379 1200,450 1178,470" fill="#d4d4f0" fill-opacity="0.6"/>
<polyline points="1195,470 1199,410" fill="none" stroke="#6e6e6e" stroke-width="1.3" stroke-linecap="butt" stroke-linejoin="round"/>
<polyline points="1197,470 1203,416" fill="none" stroke="#6e6e6e" stroke-width="1.3" stroke-linecap="butt" stroke-linejoin="round"/>
<polyline points="1203,462 1212,402" fill="none" stroke="#6e6e6e" stroke-width="1.3" stroke-linecap="butt" stroke-linejoin="round"/>
<polyline points="1208,460 1215,408" fill="none" stroke="#6e6e6e" stroke-width="1.3" stroke-linecap="butt" stroke-linejoin="round"/>
<circle cx="1204" cy="460" r="2.4" fill="#555"/>
<circle cx="1215" cy="444" r="2.2" fill="#555"/>
<polygon points="1196,480 1193.7,432 1192.3,432 1192,480" fill="#8a8a8a"/>
<polygon points="1243.5,358 1288.6,338.8 1336.2,358 1290,362.5" fill="#e2e2f8" stroke="#808080" stroke-width="1" stroke-linejoin="round"/>
<polygon points="1243.5,358 1290,362.5 1336.2,358 1305,486 1280.4,486" fill="#ffffff" stroke="#808080" stroke-width="1" stroke-linejoin="round"/>
<polygon points="1290,362.5 1336.2,358 1305,486 1293,487" fill="#e4e4fb"/>
<polygon points="1288,363 1297,363 1296,470 1291,470" fill="#d9d9f5"/>
<polyline points="1279,361 1287,486" fill="none" stroke="#777" stroke-width="1" stroke-linecap="butt" stroke-linejoin="round"/>
<polyline points="1298,361 1294,486" fill="none" stroke="#777" stroke-width="1" stroke-linecap="butt" stroke-linejoin="round"/>
<polyline points="1316,361 1299,486" fill="none" stroke="#777" stroke-width="1" stroke-linecap="butt" stroke-linejoin="round"/>
<polyline points="1323,361 1301,486" fill="none" stroke="#777" stroke-width="1" stroke-linecap="butt" stroke-linejoin="round"/>
<polyline points="1330,361 1303,486" fill="none" stroke="#777" stroke-width="1" stroke-linecap="butt" stroke-linejoin="round"/>
<polyline points="1243.5,360 1290,364.5 1336.2,360" fill="none" stroke="#808080" stroke-width="0.8" stroke-linecap="butt" stroke-linejoin="round"/>
<polyline points="1293.5,469.4 1293.5,455" fill="none" stroke="#0000ee" stroke-width="1.6" stroke-linecap="butt" stroke-linejoin="round"/>
<polyline points="1293.5,469.4 1282.5,466.5" fill="none" stroke="#e00000" stroke-width="1.6" stroke-linecap="butt" stroke-linejoin="round"/>
<polyline points="1293.5,469.4 1284,472.5" fill="none" stroke="#00cc00" stroke-width="1.6" stroke-linecap="butt" stroke-linejoin="round"/>
<rect x="1362.5" y="435.9" width="10" height="3.4" fill="#e01828" transform="rotate(-12 1367.5 437.6)"/>
<rect x="1364.5" y="442.4" width="9" height="3.6" fill="#e01828" transform="rotate(-12 1369 444.2)"/>
<polygon points="1399,369.5 1459.7,373.6 1454.8,408.9 1425.3,469.6 1384.3,473 1372.8,418.7" fill="#ffffff" stroke="#808080" stroke-width="1" stroke-linejoin="round"/>
<polygon points="1417,422 1454.8,377 1454.8,408.9 1425.3,469.6 1408,471" fill="#eeeeff"/>
<polyline points="1372.8,418.7 1404,420.5 1417,422 1455,375.5" fill="none" stroke="#777" stroke-width="1" stroke-linecap="butt" stroke-linejoin="round"/>
<polyline points="1404,420.5 1449,373.5" fill="none" stroke="#777" stroke-width="1" stroke-linecap="butt" stroke-linejoin="round"/>
<polyline points="1417,422 1408,471" fill="none" stroke="#777" stroke-width="1" stroke-linecap="butt" stroke-linejoin="round"/>
<polyline points="1374,426 1416,428" fill="none" stroke="#888" stroke-width="0.8" stroke-linecap="butt" stroke-linejoin="round"/>
<polyline points="1385,430 1393,472" fill="none" stroke="#888" stroke-width="0.8" stroke-linecap="butt" stroke-linejoin="round"/>
<polyline points="1452,375 1452,381 1459,380" fill="none" stroke="#777" stroke-width="0.8" stroke-linecap="butt" stroke-linejoin="round"/>
<polyline points="1452,389 1458,388" fill="none" stroke="#777" stroke-width="0.8" stroke-linecap="butt" stroke-linejoin="round"/>
<polygon points="1432,446 1449,444 1455,452 1452,462 1440,464" fill="#a9abc8" stroke="#666" stroke-width="0.8" stroke-linejoin="round"/>
<polygon points="1162.5,491.8 1354.5,542.3 1357.5,530.7 1165.5,480.2" fill="#5e2711"/>
<polygon points="1162.9,490.2 1354.9,540.7 1357.1,532.3 1165.1,481.8" fill="#843a1d"/>
<polygon points="1163.5,487.7 1355.5,538.2 1356.5,534.8 1164.5,484.3" fill="#974825"/>
<polygon points="1163.9,486.5 1355.9,537 1356.1,536 1164.1,485.5" fill="#6d2e15"/>
<polygon points="1381.8,476 1381.8,515 1392.2,515 1392.2,476" fill="#5e2711"/>
<polygon points="1383.2,476 1383.2,515 1390.8,515 1390.8,476" fill="#843a1d"/>
<polygon points="1385.4,476 1385.4,515 1388.6,515 1388.6,476" fill="#974825"/>
<polygon points="1386.6,476 1386.6,515 1387.4,515 1387.4,476" fill="#6d2e15"/>
<path d="M1356 536.500Q1384 545 1387 515" fill="none" stroke="#5e2711" stroke-width="12"/><path d="M1356 536.500Q1384 545 1387 515" fill="none" stroke="#843a1d" stroke-width="8.500"/><path d="M1356 536.500Q1384 545 1387 515" fill="none" stroke="#974825" stroke-width="3.500"/>
<rect x="1381.2" y="509.2" width="11.5" height="3.5" fill="#b5b5b5" transform="rotate(0 1387 511)"/>
<rect x="1374.2" y="523" width="3.5" height="12" fill="#9a9a9a" transform="rotate(30 1376 529)"/>
<rect x="1359.2" y="530.5" width="3.5" height="13" fill="#9a9a9a" transform="rotate(15 1361 537)"/>
<polygon points="1190,480 1190,579 1200,579 1200,480" fill="#5e2711"/>
<polygon points="1191.4,480 1191.4,579 1198.6,579 1198.6,480" fill="#843a1d"/>
<polygon points="1193.5,480 1193.5,579 1196.5,579 1196.5,480" fill="#974825"/>
<polygon points="1194.6,480 1194.6,579 1195.4,579 1195.4,480" fill="#6d2e15"/>
<rect x="1188.5" y="578.8" width="13" height="4.5" fill="#a9a9b0" transform="rotate(-5 1195 581)"/>
<path d="M1195 579Q1196 603 1178 611.500" fill="none" stroke="#5e2711" stroke-width="10.500"/><path d="M1195 579Q1196 603 1178 611.500" fill="none" stroke="#843a1d" stroke-width="7.500"/><path d="M1195 579Q1196 603 1178 611.500" fill="none" stroke="#974825" stroke-width="3"/>
<polygon points="1175.9,606.7 701.3,807.3 706.7,819.9 1180.1,616.3" fill="#5e2711"/>
<polygon points="1176.5,608 702.1,809 705.9,818.2 1179.5,615" fill="#843a1d"/>
<polygon points="1177.4,610.1 703.2,811.7 704.8,815.5 1178.6,612.9" fill="#974825"/>
<polygon points="1177.8,611.1 703.8,813.1 704.2,814.1 1178.2,611.9" fill="#6d2e15"/>
<rect x="1183.5" y="596.5" width="13" height="5" fill="#a9a9b0" transform="rotate(35 1190 599)"/>
<rect x="1176.5" y="605.5" width="5" height="13" fill="#a9a9b0" transform="rotate(-25 1179 612)"/>
<rect x="1106.600" y="324.400" width="378.600" height="201.200" fill="none" stroke="#c80000" stroke-width="2"/>
</svg>
<div id="topbar">
<div id="logo"><span>BiMiT</span><i></i></div>
<div class="ti" style="left:347.300px;top:1.500px"><svg viewBox="0 0 24 24" fill="none" stroke="#e6e6e6" stroke-width="2"><rect x="3" y="7.600" width="18" height="12.400" rx="1.400"/><path d="M8.400 7.600V4.200h7.200v3.400M3 13.400h7.200M13.800 13.400H21" stroke-width="1.800"/><rect x="10.200" y="11.800" width="3.600" height="3.200" fill="#e6e6e6" stroke="none"/></svg></div>
<div class="ti" style="left:381px;top:2.500px"><svg viewBox="0 0 24 24" fill="#e6e6e6"><circle cx="12" cy="6.400" r="2.300" fill="none" stroke="#e6e6e6" stroke-width="1.700"/><path d="M7.600 19.200v-3c0-2.600 1.800-4.400 4.400-4.400s4.400 1.800 4.400 4.400v3" fill="none" stroke="#e6e6e6" stroke-width="1.800"/><circle cx="4.800" cy="10.600" r="1.900"/><circle cx="19.200" cy="10.600" r="1.900"/><path d="M1.200 19.600v-3c0-2 1.400-3.400 3.400-3.400.700 0 1.200.100 1.700.400-.500 1-.800 2-.800 3.200v2.800zM22.800 19.600v-3c0-2-1.400-3.400-3.400-3.400-.700 0-1.200.100-1.700.400.500 1 .800 2 .800 3.200v2.800z"/></svg></div>
<div class="ti" style="left:415px"><svg viewBox="0 0 24 24" fill="none" stroke="#e6e6e6" stroke-width="2"><path d="M11.800 20.600C7.400 19.200 4.200 15.400 4.200 11V5.800L11 2.900l6.800 2.900v4.600"/><circle cx="17.200" cy="17" r="4.900" fill="#e6e6e6" stroke="#555" stroke-width="1.200"/><circle cx="17.200" cy="15.400" r="1.300" fill="#555" stroke="none"/><path d="M14.600 19.400c.400-1.200 1.500-1.700 2.600-1.700s2.200.500 2.600 1.700z" fill="#555" stroke="none"/></svg></div>
<div class="tsep" style="left:443px"></div>
<div id="space">Базовое пространство</div>
<div class="abs" style="left:628px;top:11px;width:0;height:0;border:5px solid transparent;border-top:5.500px solid #f2f2f2;border-bottom:0"></div>
<div id="proj">Школа</div>
<div class="ti" style="left:1083px;top:2px"><svg viewBox="0 0 24 24" fill="#e0e0e0"><path d="M19.430 12.980c.040-.320.070-.640.070-.980 0-.340-.030-.660-.070-.980l2.110-1.650c.190-.150.240-.420.120-.640l-2-3.460c-.090-.160-.260-.250-.440-.250-.060 0-.120.010-.170.030l-2.490 1c-.520-.400-1.080-.730-1.690-.980l-.380-2.650C14.460 2.180 14.250 2 14 2h-4c-.250 0-.460.180-.490.420l-.380 2.650c-.610.250-1.170.590-1.690.980l-2.490-1c-.060-.020-.120-.030-.180-.030-.170 0-.340.090-.430.250l-2 3.460c-.130.220-.070.490.120.640l2.110 1.650c-.040.320-.070.650-.070.980 0 .330.030.660.070.980l-2.110 1.650c-.190.150-.240.420-.120.640l2 3.460c.090.160.260.250.440.250.060 0 .120-.010.170-.030l2.490-1c.520.400 1.080.730 1.690.980l.380 2.650c.030.240.240.420.490.420h4c.250 0 .460-.180.490-.420l.380-2.650c.610-.250 1.170-.590 1.690-.980l2.490 1c.060.020.120.030.180.030.170 0 .340-.090.430-.250l2-3.460c.120-.220.070-.490-.120-.640l-2.110-1.650zm-1.980-1.710c.040.310.050.520.050.730 0 .210-.020.430-.050.730l-.140 1.130.890.700 1.080.840-.700 1.210-1.270-.510-1.040-.420-.900.680c-.430.320-.840.560-1.250.730l-1.060.430-.160 1.130-.200 1.350h-1.400l-.190-1.350-.160-1.130-1.060-.430c-.430-.180-.830-.410-1.230-.710l-.910-.700-1.060.430-1.270.510-.700-1.210 1.080-.840.890-.700-.140-1.130c-.030-.310-.050-.540-.050-.740s.020-.430.050-.730l.140-1.130-.890-.700-1.080-.840.700-1.210 1.270.510 1.040.420.900-.680c.430-.320.840-.560 1.250-.730l1.060-.430.160-1.130.200-1.350h1.390l.190 1.350.160 1.130 1.060.430c.430.180.830.410 1.230.710l.910.700 1.060-.430 1.270-.510.700 1.210-1.070.850-.890.700.140 1.130zM12 8c-2.210 0-4 1.790-4 4s1.790 4 4 4 4-1.790 4-4-1.790-4-4-4zm0 6c-1.100 0-2-.900-2-2s.900-2 2-2 2 .900 2 2-.900 2-2 2z"/></svg></div>
<div class="ti" style="left:1119px;top:2px"><svg viewBox="0 0 24 24" fill="#e0e0e0"><path transform="translate(24,0) scale(-1,1)" d="M10 9V5l-7 7 7 7v-4.100c5 0 8.500 1.600 11 5.100-1-5-4-10-11-11z"/></svg></div>
<div class="tsep" style="left:1637px"></div>
<div class="ti" style="left:1658px;top:2px;width:26px;height:26px"><svg viewBox="0 0 24 24" fill="#f0f0f0"><path d="M15.500 14h-.790l-.280-.270C15.410 12.590 16 11.110 16 9.500 16 5.910 13.090 3 9.500 3S3 5.910 3 9.500 5.910 16 9.500 16c1.610 0 3.090-.590 4.230-1.570l.270.280v.790l5 4.990L20.490 19l-4.990-5zm-6 0C7.010 14 5 11.990 5 9.500S7.010 5 9.500 5 14 7.010 14 9.500 11.990 14 9.500 14z"/></svg></div>
<div class="ti" style="left:1727.800px;top:1.700px"><svg viewBox="0 0 24 24" fill="#e6e6e6"><path d="M4 10.500c-.830 0-1.500.670-1.500 1.500s.670 1.500 1.500 1.500 1.500-.670 1.500-1.500-.670-1.500-1.500-1.500zm0-6c-.830 0-1.500.670-1.500 1.500S3.170 7.500 4 7.500 5.500 6.830 5.500 6 4.830 4.500 4 4.500zm0 12c-.830 0-1.500.680-1.500 1.500s.680 1.500 1.500 1.500 1.500-.680 1.500-1.500-.670-1.500-1.500-1.500zM7 19h14v-2H7v2zm0-6h14v-2H7v2zm0-8v2h14V5H7z"/></svg></div>
<div class="ti" style="left:1761px;top:2.600px"><svg viewBox="0 0 24 24" fill="#e6e6e6"><path d="M12 22c1.100 0 2-.900 2-2h-4c0 1.100.890 2 2 2zm6-6v-5c0-3.070-1.640-5.640-4.500-6.320V4c0-.830-.670-1.500-1.500-1.500s-1.500.670-1.500 1.500v.680C7.630 5.360 6 7.920 6 11v5l-2 2v1h16v-1l-2-2z"/><path d="M17.600 12.600a5 5 0 1 1-1.400-5.400" fill="none" stroke="#444" stroke-width="1.400"/><path d="M14.600 2.600l3.800 3.200-3.600 2.600z" fill="#444"/><path d="M18.400 11.200l1.800-2.400.8 3.200z" fill="#444"/><circle cx="18.800" cy="18" r="3.800" fill="#e80000"/></svg></div>
<div class="ti" style="left:1795px;top:2.700px"><svg viewBox="0 0 24 24" fill="#e6e6e6"><path d="M3 5v14c0 1.100.890 2 2 2h14c1.100 0 2-.900 2-2V5c0-1.100-.900-2-2-2H5c-1.110 0-2 .900-2 2zm12 4c0 1.660-1.340 3-3 3s-3-1.340-3-3 1.340-3 3-3 3 1.340 3 3zm-9 8c0-2 4-3.100 6-3.100s6 1.100 6 3.100v1H6v-1z"/></svg></div>
</div>

<div class="lb act" style="top:38px"><svg viewBox="0 0 48 48" fill="#e2e2e2" stroke="#e2e2e2"><rect x="8" y="9.200" width="12" height="5.600" rx="2.800" stroke="none"/><path d="M19 12h4.300v23.800h5.700M23.300 16.100h5.700M23.300 26.100h5.700" fill="none" stroke-width="1.800"/><rect x="31.400" y="14.100" width="9" height="4" rx="2" stroke="none"/><rect x="31.400" y="24.100" width="9" height="4" rx="2" stroke="none"/><rect x="31.400" y="33.800" width="9" height="4" rx="2" stroke="none"/></svg></div>
<div class="lb" style="top:88px"><svg viewBox="0 0 48 48" fill="#e6e6e6" stroke="#e6e6e6"><circle cx="19" cy="15.900" r="3.200" stroke="none"/><circle cx="19" cy="31" r="3.200" stroke="none"/><circle cx="29" cy="27" r="3.200" stroke="none"/><path d="M19 16v15M19.500 19q2 6 9.500 8" fill="none" stroke-width="2.100"/></svg></div>
<div class="lb" style="top:138px"><svg viewBox="0 0 48 48" fill="none" stroke="#e6e6e6" stroke-width="2.200" stroke-linecap="round" stroke-linejoin="round"><path d="M10.500 14.300c10 0 11 17 28.500 17M10.500 31.600c10 0 11-17.300 28.500-17.300M31 8.800c2 2.800 5 4.500 8.500 5.500-3.500.500-6.500 2.500-8.500 5.500M31 26c2 2.800 5 4.500 8.500 5.400-3.500.600-6.500 2.600-8.500 5.600"/></svg></div>
<div class="lb" style="top:188px"><svg viewBox="0 0 48 48" fill="none" stroke="#e6e6e6" stroke-width="2.800" stroke-linecap="round" stroke-linejoin="round"><path d="M30.800 13.900Q23 12.900 15.600 13.500L26.200 22.800 15.600 32.400Q23 33 30.800 32.100"/></svg></div>
<div class="lb" style="top:238px"><svg viewBox="0 0 48 48" fill="none" stroke="#e6e6e6" stroke-width="2.800" stroke-linecap="round" stroke-linejoin="round"><path d="M26.500 14.500Q19 13.500 11.600 14.200L22.200 23.300 11.600 33Q19 33.600 26.500 32.700"/><path d="M28 23.900h10M33 18.900v10" stroke-width="2.200" stroke-linecap="butt"/></svg></div>
<div class="lb" style="top:288px"><svg viewBox="0 0 48 48" fill="none" stroke="#e6e6e6" stroke-width="2.200" stroke-linejoin="round"><path d="M12.200 10.400Q25 8.400 36.600 10.800 33.600 24 34.600 37.400H12.200z"/><path d="M24.500 35.300l1.500-1.900h7v1.900z" fill="#e6e6e6" stroke="none"/><text x="23" y="26.900" font-family="Liberation Sans, sans-serif" font-size="11.500" text-anchor="middle" fill="#e6e6e6" stroke="none">2D</text></svg></div>
<div class="lb" style="top:338px"><svg viewBox="0 0 48 48" fill="none" stroke="#e6e6e6" stroke-width="2"><rect x="20.400" y="9.300" width="7" height="9.600" rx="1.200"/><rect x="9.200" y="29" width="7" height="9" rx="1.200"/><rect x="20.400" y="29" width="7" height="9" rx="1.200"/><rect x="31.800" y="29" width="7" height="9" rx="1.200"/><path d="M23.900 19v10M12.600 29v-5.100h22.700V29"/></svg></div>
<div class="lb" style="top:388px"><svg viewBox="0 0 48 48" fill="none" stroke="#e6e6e6" stroke-width="2.300" stroke-linecap="round" stroke-linejoin="round"><path d="M12.300 16.300Q17 11 19 10.800C22 11 23 18 25.600 18.200 28 18 33 10.500 36.500 8.800"/><path d="M12 24.600Q14.500 22 15.700 22.400C18 23 19.500 28.600 21.600 28.600 25 27.500 29 25 35.600 24"/><path d="M12.200 35.900h23.600" stroke-linecap="butt" stroke-width="2.400"/></svg></div>
<div class="lb" style="top:438px"><svg viewBox="0 0 48 48" fill="none" stroke="#e6e6e6" stroke-width="2.200" stroke-linejoin="round"><path d="M14.400 13.900h6v-2a3.200 3.200 0 0 1 6.400 0v2h5.200a2.600 2.600 0 0 1 2.600 2.600v5h1.800a3.200 3.200 0 0 1 0 6.400h-1.800v5a2.600 2.600 0 0 1-2.600 2.600h-5.200v-1.800a3.200 3.200 0 0 0-6.400 0v1.800h-6a2.600 2.600 0 0 1-2.600-2.600v-5h2a3.200 3.200 0 0 0 0-6.400h-2v-5a2.600 2.600 0 0 1 2.600-2.600z"/></svg></div>
<div class="lb" style="top:488px"><svg viewBox="0 0 48 48" fill="none" stroke="#e6e6e6" stroke-width="2.100"><circle cx="23.400" cy="16.500" r="6"/><path d="M22.800 33.200H11.600C11.600 27 17 22.900 23.400 22.900c4.800 0 8.800 2.600 10.600 6.400"/><path d="M27 32.400l4.200 5.800 8.600-9" stroke-width="3" stroke-linejoin="round"/></svg></div>
<div class="lb" style="top:538px"><svg viewBox="0 0 48 48" fill="none" stroke="#e6e6e6" stroke-width="2" stroke-linejoin="round" stroke-linecap="round"><path d="M8.600 15.200Q13 13 18.200 13.600L20.800 17.200 29.600 17.400Q31.600 18 33 25 36 25.200 39.400 26.500L34.400 34.300H13.800Q10 28 8.600 15.200z"/><path d="M33 25l1.400 9.300M21 26.500h18M26.200 22.400l-5.400 4.100 5.400 4.700"/></svg></div>
<div class="lb" style="top:588px"><svg viewBox="0 0 48 48" fill="none" stroke="#e6e6e6" stroke-width="2.100"><circle cx="18.500" cy="15.600" r="5.400"/><path d="M26.500 30H8.600C9.200 25.200 13.400 21.800 18.500 21.800c2.800 0 5 1 6.400 2.600"/><path d="M32.800 37.400c-3.600-3.400-5.900-6-5.900-9.200a5.900 5.900 0 0 1 11.800 0c0 3.200-2.300 5.800-5.900 9.200z" stroke-linejoin="round"/><circle cx="32.800" cy="28.200" r="1.500" fill="#e6e6e6" stroke="none"/></svg></div>
<div class="lb" style="top:638px"><svg viewBox="0 0 48 48" fill="none" stroke="#e6e6e6" stroke-width="2.200"><circle cx="24" cy="21.700" r="13"/><path d="M15.200 21.700A8.900 8.900 0 0 1 33 21.700" stroke-width="1.500" stroke-dasharray="1.600 1.800"/><path d="M26 14.600l-1 13q-2.400 1-4.300-1.200z" fill="#e6e6e6" stroke="none"/><path d="M22 34.600V39M8.900 39h30.200"/></svg></div>
<div id="help">?</div>

<div class="panel" style="left:60px;width:320px">
<svg class="abs" style="left:8.300px;top:10.600px;width:24px;height:24px" viewBox="0 0 24 24" fill="#e6e6e6"><path d="M3 6.500h13v1.800H3zM3 10.500h13v1.800H3zM3 14.500h9v1.800H3zM15 14v7l5.500-3.500z"/></svg>
<div class="ptitle" style="left:41px">СТРУКТУРА ПРОЕКТА</div>
<svg class="abs" style="left:289px;top:12px;width:24px;height:24px" viewBox="0 0 24 24" fill="none" stroke="#ececec" stroke-width="2"><path d="M5.500 5.500l13 13M18.500 5.500l-13 13"/></svg>
<div class="sh" style="left:5px;top:42px;width:310px"><span class="sx">Структура проекта</span><i class="car" style="right:7px"></i></div>
<div class="wc" style="left:5px;top:77px;width:310px;height:648px;overflow:hidden;border-radius:0 0 4px 4px">
<div class="vl" style="left:8px;top:47px;height:600px"></div>
<div class="vl" style="left:17px;top:127px;height:520px"></div>
<div class="vl" style="left:26px;top:167px;height:193px"></div>
<div class="vl" style="left:26px;top:567px;height:30px"></div>
<div class="vl" style="left:26px;top:645px;height:2px"></div>
<div class="row" style="left:8px;top:9px;width:250px"><span class="sx">Проект</span></div>
<div class="tg" style="top:21px"><i></i></div>
<div class="ex" style="left:1px;top:31px"></div>
<div class="row" style="left:17px;top:49px;width:241px"><span class="sx">Площадка</span></div>
<div class="tg" style="top:61px"><i></i></div>
<div class="row" style="left:17px;top:89px;width:241px"><span class="sx">Объект строительства</span></div>
<div class="tg on" style="top:101px"><i></i></div>
<div class="ex" style="left:10px;top:111px"></div>
<div class="row red" style="left:26px;top:129px;width:232px"><span class="sx">АР</span><svg class="fl" viewBox="0 0 14 14" fill="none" stroke="#989898" stroke-width="1.100"><rect x="1.9" y="1.9" width="4.200" height="4.200" rx="1.200" transform="rotate(45 4 4)"/><rect x="7.9" y="1.9" width="4.200" height="4.200" rx="1.200" transform="rotate(45 10 4)"/><rect x="1.9" y="7.9" width="4.200" height="4.200" rx="1.200" transform="rotate(45 4 10)"/><rect x="7.9" y="7.9" width="4.200" height="4.200" rx="1.200" transform="rotate(45 10 10)"/></svg></div>
<div class="tg on" style="top:141px"><i></i></div>
<div class="ex" style="left:19px;top:151px"></div>
<div class="row red" style="left:35px;top:169px;width:223px"><span class="sx">Зоны</span><svg class="fl" viewBox="0 0 14 14" fill="none" stroke="#989898" stroke-width="1.100"><rect x="1.9" y="1.9" width="4.200" height="4.200" rx="1.200" transform="rotate(45 4 4)"/><rect x="7.9" y="1.9" width="4.200" height="4.200" rx="1.200" transform="rotate(45 10 4)"/><rect x="1.9" y="7.9" width="4.200" height="4.200" rx="1.200" transform="rotate(45 4 10)"/><rect x="7.9" y="7.9" width="4.200" height="4.200" rx="1.200" transform="rotate(45 10 10)"/></svg></div>
<div class="tg on" style="top:181px"><i></i></div>
<div class="row" style="left:35px;top:209px;width:223px"><span class="sx">Фасад</span></div>
<div class="tg on" style="top:221px"><i></i></div>
<div class="ex r" style="left:28px;top:231px"></div>
<div class="row" style="left:35px;top:249px;width:223px"><span class="sx">Область</span></div>
<div class="tg on" style="top:261px"><i></i></div>
<div class="row" style="left:35px;top:289px;width:223px"><span class="sx">Облако</span></div>
<div class="tg on" style="top:301px"><i></i></div>
<div class="row" style="left:35px;top:329px;width:223px"><span class="sx">Немод.таблица</span></div>
<div class="tg on" style="top:341px"><i></i></div>
<div class="row red" style="left:26px;top:369px;width:232px"><span class="sx">ОВ</span><svg class="fl" viewBox="0 0 14 14" fill="none" stroke="#989898" stroke-width="1.100"><rect x="1.9" y="1.9" width="4.200" height="4.200" rx="1.200" transform="rotate(45 4 4)"/><rect x="7.9" y="1.9" width="4.200" height="4.200" rx="1.200" transform="rotate(45 10 4)"/><rect x="1.9" y="7.9" width="4.200" height="4.200" rx="1.200" transform="rotate(45 4 10)"/><rect x="7.9" y="7.9" width="4.200" height="4.200" rx="1.200" transform="rotate(45 10 10)"/></svg></div>
<div class="tg on" style="top:381px"><i></i></div>
<div class="ex r" style="left:19px;top:391px"></div>
<div class="row red sel" style="left:26px;top:409px;width:232px"><span class="sx">ВК</span><svg class="fl" viewBox="0 0 14 14" fill="none" stroke="#989898" stroke-width="1.100"><rect x="1.9" y="1.9" width="4.200" height="4.200" rx="1.200" transform="rotate(45 4 4)"/><rect x="7.9" y="1.9" width="4.200" height="4.200" rx="1.200" transform="rotate(45 10 4)"/><rect x="1.9" y="7.9" width="4.200" height="4.200" rx="1.200" transform="rotate(45 4 10)"/><rect x="7.9" y="7.9" width="4.200" height="4.200" rx="1.200" transform="rotate(45 10 10)"/></svg></div>
<div class="tg on" style="top:421px"><i></i></div>
<div class="row red" style="left:26px;top:449px;width:232px"><span class="sx">ТХ</span><svg class="fl" viewBox="0 0 14 14" fill="none" stroke="#989898" stroke-width="1.100"><rect x="1.9" y="1.9" width="4.200" height="4.200" rx="1.200" transform="rotate(45 4 4)"/><rect x="7.9" y="1.9" width="4.200" height="4.200" rx="1.200" transform="rotate(45 10 4)"/><rect x="1.9" y="7.9" width="4.200" height="4.200" rx="1.200" transform="rotate(45 4 10)"/><rect x="7.9" y="7.9" width="4.200" height="4.200" rx="1.200" transform="rotate(45 10 10)"/></svg></div>
<div class="tg on" style="top:461px"><i></i></div>
<div class="row red" style="left:26px;top:489px;width:232px"><span class="sx">ГП_дизайн</span><svg class="fl" viewBox="0 0 14 14" fill="none" stroke="#989898" stroke-width="1.100"><rect x="1.9" y="1.9" width="4.200" height="4.200" rx="1.200" transform="rotate(45 4 4)"/><rect x="7.9" y="1.9" width="4.200" height="4.200" rx="1.200" transform="rotate(45 10 4)"/><rect x="1.9" y="7.9" width="4.200" height="4.200" rx="1.200" transform="rotate(45 4 10)"/><rect x="7.9" y="7.9" width="4.200" height="4.200" rx="1.200" transform="rotate(45 10 10)"/></svg></div>
<div class="tg on" style="top:501px"><i></i></div>
<div class="row red" style="left:26px;top:529px;width:232px"><span class="sx">ЭОМ</span><svg class="fl" viewBox="0 0 14 14" fill="none" stroke="#989898" stroke-width="1.100"><rect x="1.9" y="1.9" width="4.200" height="4.200" rx="1.200" transform="rotate(45 4 4)"/><rect x="7.9" y="1.9" width="4.200" height="4.200" rx="1.200" transform="rotate(45 10 4)"/><rect x="1.9" y="7.9" width="4.200" height="4.200" rx="1.200" transform="rotate(45 4 10)"/><rect x="7.9" y="7.9" width="4.200" height="4.200" rx="1.200" transform="rotate(45 10 10)"/></svg></div>
<div class="tg on" style="top:541px"><i></i></div>
<div class="ex" style="left:19px;top:551px"></div>
<div class="row red" style="left:35px;top:569px;width:223px"><span class="sx">ЭГ</span><svg class="fl" viewBox="0 0 14 14" fill="none" stroke="#989898" stroke-width="1.100"><rect x="1.9" y="1.9" width="4.200" height="4.200" rx="1.200" transform="rotate(45 4 4)"/><rect x="7.9" y="1.9" width="4.200" height="4.200" rx="1.200" transform="rotate(45 10 4)"/><rect x="1.9" y="7.9" width="4.200" height="4.200" rx="1.200" transform="rotate(45 4 10)"/><rect x="7.9" y="7.9" width="4.200" height="4.200" rx="1.200" transform="rotate(45 10 10)"/></svg></div>
<div class="tg on" style="top:581px"><i></i></div>
<div class="row" style="left:26px;top:609px;width:232px"><span class="sx">КР (проект)</span></div>
<div class="tg on" style="top:621px"><i></i></div>
<div class="ex" style="left:19px;top:631px"></div>
<div class="abs" style="left:302px;top:0;width:8px;height:648px;background:#696969"></div>
<div class="abs" style="left:302px;top:0;width:8px;height:386px;background:#3b93b0"></div>
</div>
</div>
<div class="panel" style="left:388px;width:320px">
<div class="ptitle" style="left:9px">МОДЕЛЬ: ВК</div>
<div class="sh" style="left:5px;top:42px;width:310px"><span class="sx">Файл</span><i class="car" style="right:7px"></i></div>
<svg class="hi" style="left:196px;top:49px" viewBox="0 0 22 22" fill="none" stroke="#ededed" stroke-width="1.300"><path d="M2 6.500V2h4.500M15.500 2H20v4.500M20 15.500V20h-4.500M6.500 20H2v-4.500"/><path d="M11 6.200l4.200 2.400v4.800L11 15.800 6.800 13.400V8.600z" fill="#e0e0e0" stroke="none"/></svg>
<svg class="hi" style="left:220px;top:49px" viewBox="0 0 22 22" fill="none" stroke="#ededed" stroke-width="1.300"><rect x="2.200" y="3.200" width="17.600" height="15.600" rx="2"/><path d="M11 .500v21" stroke-width="1.600"/><rect x="5" y="13" width="3" height="3" fill="#ededed" stroke="none"/><rect x="14" y="6" width="3" height="3" fill="#ededed" stroke="none"/></svg>
<svg class="hi" style="left:244px;top:49px" viewBox="0 0 22 22" fill="none" stroke="#ededed" stroke-width="1.600"><path d="M11 3v11.500M6.200 10l4.800 4.800 4.800-4.800M3 15v3.400h16V15" /></svg>
<svg class="hi" style="left:268px;top:49px" viewBox="0 0 22 22" fill="none" stroke="#ededed" stroke-width="1.300"><rect x="3" y="3" width="16" height="16" stroke-width="1.100"/><path d="M11 6v10M6 11h10" stroke-width="2"/></svg>
<div class="wc" style="left:5px;top:77px;width:310px;height:262px;overflow:hidden">
<div class="abs" style="left:68px;top:-4px;font-size:10.500px;line-height:11px;color:#111">Y: 0<br>Z: 0</div>
<div class="lk" style="top:28px">Паспорт ревизии<b></b></div>
<div class="lk" style="top:52px">Аннотация</div>
<div class="lk" style="top:80px">Выбрать другую ревизию</div>
<div class="lk" style="top:108px">Сравнение ревизий</div>
<div class="lk" style="top:136px">Визуализация: быстрая</div>
<div class="lk" style="top:168px">Смещение/поворот<b></b></div>
<div class="lk" style="top:196px">Подозрительные элементы<b></b></div>
<div class="abs" style="left:42px;top:222px;width:32px;height:32px;background:#c8c8c8"></div>
<svg class="abs" style="left:12px;top:226px;width:24px;height:24px" viewBox="0 0 24 24" fill="none" stroke="#555"><path d="M2 7V4.200A2.200 2.200 0 0 1 4.200 2H7M17 2h2.800A2.200 2.200 0 0 1 22 4.200V7M22 17v2.800a2.200 2.200 0 0 1-2.200 2.200H17M7 22H4.200A2.200 2.200 0 0 1 2 19.800V17" stroke-width="1.500"/><path d="M5.600 12c1.600-2.600 3.800-3.900 6.400-3.900s4.800 1.300 6.400 3.900c-1.600 2.600-3.800 3.900-6.400 3.900S7.200 14.600 5.600 12z" stroke-width="1.300"/><circle cx="12" cy="12" r="1.700" fill="#555" stroke="none"/></svg>
<svg class="abs" style="left:46px;top:226px;width:24px;height:24px" viewBox="0 0 24 24" fill="none" stroke="#555"><path d="M2 7V4.200A2.200 2.200 0 0 1 4.200 2H7M17 2h2.800A2.200 2.200 0 0 1 22 4.200V7M22 17v2.800a2.200 2.200 0 0 1-2.200 2.200H17M7 22H4.200A2.200 2.200 0 0 1 2 19.800V17" stroke-width="1.500"/><path d="M12 6.200l5 2.800v5.800l-5 2.900-5-2.900V9zM7 9l5 2.900L17 9M12 11.900v5.800" stroke-width="1.200" stroke-linejoin="round"/></svg>
<svg class="abs" style="left:80px;top:226px;width:24px;height:24px" viewBox="0 0 24 24" fill="none" stroke="#555"><path d="M2 7V4.200A2.200 2.200 0 0 1 4.200 2H7M17 2h2.800A2.200 2.200 0 0 1 22 4.200V7M22 17v2.800a2.200 2.200 0 0 1-2.200 2.200H17M7 22H4.200A2.200 2.200 0 0 1 2 19.800V17" stroke-width="1.500"/><ellipse cx="15.500" cy="15.500" rx="4" ry="3" fill="#c4c4c4" stroke="none" transform="rotate(35 15.500 15.500)"/><path d="M10.600 6.400l4.200 2.400v4.800l-4.200 2.400-4.200-2.400V8.800zM6.400 8.800l4.200 2.400 4.200-2.400M10.600 11.200V16" stroke-width="1.200" stroke-linejoin="round"/></svg>
<div class="abs" style="left:302px;top:0;width:8px;height:262px;background:#696969"></div>
<div class="abs" style="left:302px;top:87px;width:8px;height:175px;background:#3b93b0"></div>
</div>
<div class="hnd" style="top:341px"></div>
<div class="sh closed" style="left:5px;top:346px;width:310px;height:35px"><span class="sx">Статус</span><i class="car up" style="right:7px"></i></div>
<div class="sh" style="left:5px;top:384px;width:310px;height:35px"><span class="sx">Команда</span><i class="car" style="right:7px"></i></div>
<svg class="hi" style="left:215px;top:390px" viewBox="0 0 22 22" fill="#dcdcdc" stroke="none"><circle cx="9.500" cy="5" r="3"/><path d="M3.600 12.600c0-2.200 3.600-3.300 5.900-3.300s5.900 1.100 5.900 3.300v.600H3.600z"/><path d="M7.500 14.800h4a2.600 2.600 0 0 1 0 5.200h-4a2.600 2.600 0 0 1 0-5.200zM7.200 17.400h4.600M17.500 14.300v6M14.500 17.300h6" fill="none" stroke="#dcdcdc" stroke-width="1.200"/></svg>
<svg class="hi" style="left:243px;top:391px;width:20px;height:20px" viewBox="0 0 24 24" fill="#ededed"><path d="M16 1H4c-1.100 0-2 .900-2 2v14h2V3h12V1zm3 4H8c-1.100 0-2 .900-2 2v14c0 1.100.900 2 2 2h11c1.100 0 2-.900 2-2V7c0-1.100-.900-2-2-2zm0 16H8V7h11v14z"/></svg>
<svg class="hi" style="left:268px;top:390px" viewBox="0 0 22 22" fill="none" stroke="#ededed" stroke-width="1.300"><rect x="3" y="3" width="16" height="16" stroke-width="1.100"/><path d="M11 6v10M6 11h10" stroke-width="2"/></svg>
<div class="wc" style="left:5px;top:419px;width:310px;height:147px;border-radius:0 0 4px 4px">
<div class="lk" style="left:5px;top:7px">ГИП/BIM менеджер<b></b></div>
<div class="lk" style="left:5px;top:27px">Отдел контроля<b></b></div>
</div>
<div class="hnd" style="top:568px"></div>
<div class="sh" style="left:5px;top:573px;width:310px;height:35px"><span class="sx">Вложения</span><i class="car" style="right:7px"></i></div>
<svg class="hi" style="left:268px;top:579px" viewBox="0 0 22 22" fill="none" stroke="#ededed" stroke-width="1.300"><rect x="3" y="3" width="16" height="16" stroke-width="1.100"/><path d="M11 6v10M6 11h10" stroke-width="2"/></svg>
<div class="wc" style="left:5px;top:608px;width:310px;height:152px;border-radius:0 0 4px 4px">
<svg class="abs" style="left:3px;top:16px" width="304" height="34" viewBox="0 0 304 34"><rect x="1.500" y="1.500" width="301" height="31" rx="5" fill="none" stroke="#3a8fb0" stroke-width="1.400" stroke-dasharray="2.400 3.600" stroke-linecap="butt"/></svg>
<div class="abs" style="left:4px;top:17px;width:302px;height:32px;text-align:center;line-height:34px;font-size:12.500px;color:#3a8aa8">Добавить вложение</div>
</div>
</div>
<div id="rt"><svg width="36" height="773" viewBox="0 0 36 773" fill="none" stroke="#e6e6e6" stroke-width="1.300" style="display:block">
<rect x="0" y="91.7" width="36" height="1.500" fill="#141414" stroke="none"/>
<rect x="0" y="361.0" width="36" height="1.500" fill="#141414" stroke="none"/>
<rect x="0" y="409.5" width="36" height="1.500" fill="#141414" stroke="none"/>
<rect x="0" y="590.7" width="36" height="1.500" fill="#141414" stroke="none"/>
<rect x="0" y="683.7" width="36" height="1.500" fill="#141414" stroke="none"/>
<g transform="translate(0,-38)"><path d="M18.400 56.300V73M18.400 63.500l-4.600-3.400M18.400 67.500l4.600-4.200" stroke-width="1.500"/><path d="M15.200 67.200c-3 .600-8.600-.800-8.600-5.400 0-3.600 3.400-5.400 6-4.800.400-3.600 3-6 5.800-6s5.600 2.400 5.900 6c2.600-.600 6 1.200 6 4.800 0 4.600-5.600 6-8.600 5.400" stroke-width="1.500"/></g>
<g transform="translate(0,-38)"><path d="M17.700 111H5.600V93.800h23V100.500M10.500 113.500h3.200v-2.500" stroke-width="1.300"/><path d="M15.500 107V102.700h4.800M25.800 102.700h4.600V107M30.400 114v4.300h-4.600M20.300 118.300h-4.800V114" stroke-width="1.300"/><path d="M22.900 105.700l4.100 2.400v4.700l-4.100 2.400-4.100-2.400v-4.700z" fill="#e0e0e0" stroke="none"/></g>
<g transform="translate(0,-38)"><rect x="5.500" y="150.600" width="25.200" height="7.800" stroke-width="1.300"/><path d="M9.500 158v-4.400M14.500 158v-4.400M19.800 158v-4.600M25 158v-4.400M12 158v-2M17.200 158v-2M22.400 158v-2M27.600 158v-2" stroke-width="1.200"/><rect x="5" y="160.200" width="26.200" height="1.900" fill="#e6e6e6" stroke="none"/></g>
<g transform="translate(0,-38)"><path d="M13.300 193.200l9.800-8v19.700l-9.800 7.700z" fill="#e0e0e0" stroke="none"/><path d="M5.400 201.600l8.600-6.400h16.600l-8.200 6.400z" stroke-width="1.200"/></g>
<g transform="translate(0,-38)" stroke-width="1.100"><path d="M15.300 237.800l6.400-5.300v15.800l-6.400 5.300z" fill="#e0e0e0" stroke="none"/><rect x="6.200" y="237.700" width="16.300" height="16.100"/><path d="M6.200 237.700l7.700-5.500h16.300v16.100l-7.700 5.500M22.500 237.700l7.700-5.500M13.900 232.200v15.800l-7.700 5.800M13.900 248.300h16.300"/></g>
<g transform="translate(0,-38)"><path d="M9 277H30v18.500H4.700V281z" stroke-width="1.300"/><path d="M4.700 281.300H9V277" stroke-width="1"/><path d="M30.900 278.500v18H6.500" stroke-width="1.800"/><path d="M16.300 277v18.500M4.700 285.400H30" stroke-width="1.100" stroke-dasharray="2.200 1.100"/><path d="M22.800 295.500v-3h7" stroke-width="1.100"/></g>
<g transform="translate(0,-38)"><circle cx="17.900" cy="331" r="7.900" stroke-width="2.200"/><circle cx="17.900" cy="331" r="4" fill="#e6e6e6" stroke="none"/><path d="M17.900 320v3M17.900 339v3M6.900 331h3M25.900 331h3" stroke-width="2"/></g>
<g transform="translate(0,-38)"><circle cx="17.900" cy="375" r="12.800" stroke-width="1.200"/><path d="M12.600 382.200v-13.700h7.100l1.600 1.800h4.300v7.400h-6.500l-1.200-1.800h-5.300" stroke-width="1.200"/></g>
<g transform="translate(0,-38)" stroke-width="1.100"><path d="M3.100 428.200L33 411M3.400 437.800L33 421.100M4 422.400l18.800 11.100M12.900 416.200l18.800 10.500"/><text x="3.200" y="420.600" font-family="Liberation Sans, sans-serif" font-size="6" font-weight="bold" fill="#e6e6e6" stroke="none">1</text><text x="13" y="414" font-family="Liberation Sans, sans-serif" font-size="6" font-weight="bold" fill="#e6e6e6" stroke="none">2</text></g>
<g transform="translate(0,-38)"><rect x="6.600" y="461.6" width="23" height="23" stroke-width="1.300" stroke-dasharray="2.300 1.700"/><path d="M17.900 466.400l5.700 3.300v6.600l-5.700 3.400-5.700-3.400v-6.600zM12.200 469.700l5.700 3.300 5.700-3.300M17.900 473v6.700" stroke-width="1" stroke="#dcdcdc"/></g>
<g transform="translate(0,-38)"><rect x="6.600" y="505.6" width="23" height="23" stroke-width="1.300" stroke-dasharray="2.300 1.700"/><path d="M10.800 517c1.800-3.200 4.400-4.900 7.400-4.900s5.600 1.700 7.400 4.900c-1.800 3.200-4.400 4.900-7.400 4.900s-5.600-1.700-7.400-4.900z" fill="#e6e6e6" stroke="none"/><circle cx="18.200" cy="517" r="2.700" fill="#e6e6e6" stroke="#555" stroke-width="1.300"/></g>
<g transform="translate(0,-38)"><rect x="6.600" y="549.6" width="23" height="23" stroke-width="1.300" stroke-dasharray="2.300 1.700"/><path d="M10 561c1.800-3.400 4.800-5.200 8.200-5.200s6.400 1.800 8.200 5.200c-1.800 3.400-4.800 5.200-8.200 5.200S11.800 564.400 10 561z" fill="#e0e0e0" stroke="none"/><circle cx="18" cy="561" r="2.600" fill="none" stroke="#555" stroke-width="1.200"/><path d="M11.200 555.200l13.500 12.600" stroke="#555" stroke-width="2.600"/><path d="M10.800 554.600l14 13" stroke="#e6e6e6" stroke-width="1.300"/></g>
<g transform="translate(0,-38)"><rect x="6.600" y="593.6" width="23" height="23" stroke-width="1.300" stroke-dasharray="2.300 1.700"/><rect x="15.900" y="603" width="16.300" height="16.100" fill="#e2e2e2" stroke="none"/><path d="M19.800 606.600l8.400 8.800M28.200 606.600l-8.400 8.800" stroke="#444" stroke-width="1.300"/></g>
<g transform="translate(0,-38)"><rect x="2" y="638" width="32" height="32" fill="#8e8e8e" stroke="none"/><path d="M6.200 645.400l11.800-2.800 11.200 2.600-1.400 13-9.800 8.400-10.600-8.400z" fill="#e4e4e4" stroke="none"/><path d="M9.600 645.600l8.400-1.400 7.400 1.600-7.200 2.200z" fill="#8a8a8a" stroke="none"/><path d="M18.400 649.600l9.400-3-1.200 11.200-8 7z" fill="#8e8e8e" stroke="none"/></g>
<g transform="translate(0,-38)"><rect x="2" y="682" width="32" height="32" fill="#8e8e8e" stroke="none"/><ellipse cx="18" cy="698.200" rx="11.400" ry="5.200" stroke-width="1.900"/><ellipse cx="18" cy="698" rx="4.800" ry="10.400" stroke-width="1.900"/><path d="M18.200 695v3l-3.200 3.200M18.200 698l3.400 3" stroke-width="0.900"/></g>
<path d="M0.500 772.500v-4l4 4z" fill="#e6e6e6" stroke="none"/>
</svg></div>
<div class="abs" style="left:716px;top:38px;width:32px;height:32px;background:#555"><svg viewBox="0 0 32 32" width="32" height="32" fill="none" stroke="#f0f0f0" stroke-width="1.500"><path d="M4.500 12V4.500H12M20 4.500h7.500V12M27.500 20v7.500H20M12 27.500H4.500V20"/><path d="M16 9.800l5.400 3.100v6.200L16 22.200l-5.400-3.100v-6.200z" fill="#e4e4e4" stroke="none"/></svg></div>
</body></html>
